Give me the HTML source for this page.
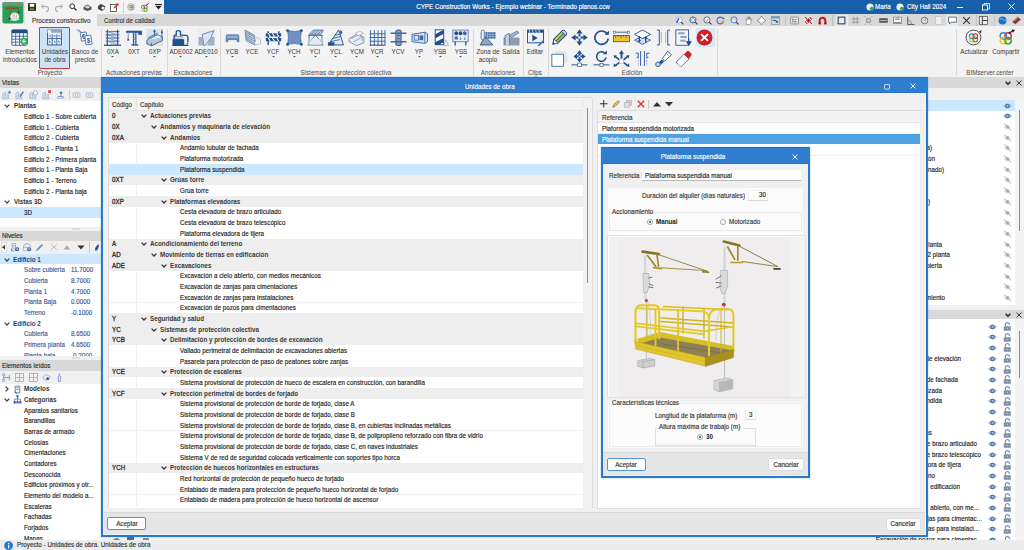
<!DOCTYPE html><html><head><meta charset="utf-8"><style>

html,body{margin:0;padding:0;width:1024px;height:550px;overflow:hidden;background:#f3f3f3;font-family:"Liberation Sans", sans-serif;}
div{position:absolute;box-sizing:border-box;}
.t{font-size:6.55px;line-height:10px;height:10px;white-space:nowrap;color:#222;-webkit-text-stroke:0.15px currentColor;transform:scaleX(0.95);transform-origin:0 50%;letter-spacing:0.04px;}
.b{font-weight:bold;font-size:6.6px;letter-spacing:0px;-webkit-text-stroke:0px;}
.c{width:120px;text-align:center;transform-origin:50% 50%;}
svg{position:absolute;overflow:visible;}

</style></head><body>
<div style="left:164.00px;top:0.00px;width:860.00px;height:14.00px;background:#185faa"></div>
<div class="t c" style="left:363px;width:300px;top:1.5px;color:#fff;">CYPE Construction Works - Ejemplo webinar - Terminado planos.ccw</div>
<div class="t" style="left:875.00px;top:1.90px;color:#fff">Maria</div>
<div class="t" style="left:906.50px;top:1.90px;color:#fff">City Hall 2024</div>
<svg style="left:865.50px;top:2.50px" width="8" height="8" viewBox="0 0 8 8"><circle cx="4" cy="4" r="3.6" fill="#e8eef5"/><circle cx="5.8" cy="5.8" r="2" fill="#39a84a"/></svg>
<svg style="left:896.00px;top:2.50px" width="8" height="8" viewBox="0 0 8 8"><circle cx="4" cy="4" r="3.6" fill="#e8eef5"/><circle cx="5.8" cy="5.8" r="2" fill="#39a84a"/></svg>
<div style="left:957.00px;top:6.50px;width:6.00px;height:0.80px;background:#fff"></div>
<svg style="left:982.00px;top:3.00px" width="8" height="8" viewBox="0 0 8 8"><rect x="0.5" y="2" width="5" height="5" fill="none" stroke="#fff" stroke-width="0.9"/><path d="M2 2V0.5h5.5V6H6" fill="none" stroke="#fff" stroke-width="0.8"/></svg>
<svg style="left:1007.50px;top:3.00px" width="7" height="7" viewBox="0 0 7 7"><path d="M0.5 0.5L6.5 6.5M6.5 0.5L0.5 6.5" stroke="#fff" stroke-width="1"/></svg>
<div style="left:0.00px;top:0.00px;width:24.50px;height:26.50px;background:#f3f3f3;border-right:0.5px solid #e2e2e2;border-bottom:0.5px solid #e2e2e2"></div>
<svg style="left:1.50px;top:2.00px" width="22" height="21.5" viewBox="0 0 22 21.5"><rect x="0.4" y="0" width="21" height="21.4" rx="1.6" fill="#24a05c"/><path d="M0.4 1.6Q0.4 0 2 0H19.8Q21.4 0 21.4 1.6V3.7H0.4Z" fill="#6a9c7a"/><path d="M3.7 6.3H17.2" stroke="#8a6424" stroke-width="2.6"/><path d="M4.5 6.3H16.5" stroke="#5a4020" stroke-width="0.8" stroke-dasharray="1 1"/><path d="M8.4 3.2V16.5" stroke="#8a6424" stroke-width="1.5"/><path d="M6.5 16.8H9.5" stroke="#3a2a10" stroke-width="1.2"/><path d="M16.7 7.5V10" stroke="#444" stroke-width="0.6"/><rect x="16.1" y="9.6" width="1.3" height="1.5" fill="#3a2a10"/><ellipse cx="12.7" cy="14.5" rx="4.4" ry="4" fill="#f4f4f4"/><path d="M11 11.5V17.5M12.7 10.8V18.2M14.4 11.5V17.5" stroke="#aaa" stroke-width="0.6"/><path d="M8 17.8Q12.7 19.6 17.5 17.3" stroke="#ddd" stroke-width="1" fill="none"/></svg>
<svg style="left:27.50px;top:3.00px" width="8" height="8" viewBox="0 0 8 8"><rect x="0" y="0" width="8" height="8" rx="0.8" fill="#3a2f10"/><rect x="1.8" y="0.8" width="4.4" height="3" fill="#fff"/><rect x="2" y="5.2" width="4" height="2" fill="#776"/></svg>
<svg style="left:41.00px;top:3.00px" width="8" height="8" viewBox="0 0 8 8"><path d="M2.5 1.5L0.8 3.5L2.5 5.5M1 3.5H5a2.5 2.5 0 0 1 0 5" fill="none" stroke="#a9a9a9" stroke-width="1.1"/></svg>
<svg style="left:54.50px;top:3.00px" width="8" height="8" viewBox="0 0 8 8"><path d="M5.5 1.5L7.2 3.5L5.5 5.5M7 3.5H3a2.5 2.5 0 0 0 0 5" fill="none" stroke="#a9a9a9" stroke-width="1.1"/></svg>
<svg style="left:69.00px;top:3.00px" width="8" height="8" viewBox="0 0 8 8"><circle cx="3.2" cy="3.2" r="2.4" fill="none" stroke="#333" stroke-width="1"/><path d="M5 5L7.5 7.5" stroke="#333" stroke-width="1.3"/></svg>
<svg style="left:83.00px;top:3.00px" width="9" height="8" viewBox="0 0 9 8"><path d="M0.5 4L4.5 1.5L8.5 4V6.5L4.5 8L0.5 6.5Z" fill="#555"/><path d="M1.5 4L4.5 2.5L7.5 4L4.5 5.5Z" fill="#ddd"/></svg>
<svg style="left:96.50px;top:3.00px" width="9" height="8" viewBox="0 0 9 8"><path d="M1 3L4 1L8 3V6L5 8L1 6Z" fill="#444"/><circle cx="6" cy="5" r="1.6" fill="#eee"/></svg>
<svg style="left:110.00px;top:2.50px" width="9" height="9" viewBox="0 0 9 9"><rect x="0.5" y="1.5" width="6" height="7" fill="#fff" stroke="#444" stroke-width="0.8"/><path d="M4 5L8 1" stroke="#e02020" stroke-width="1.2"/><path d="M6 0.5H8.5V3" fill="#e02020"/></svg>
<div style="left:122.50px;top:1.50px;width:0.60px;height:11.00px;background:#d0d0d0"></div>
<svg style="left:127.00px;top:3.00px" width="8" height="8" viewBox="0 0 8 8"><circle cx="4" cy="4" r="3.4" fill="#f7f7f7" stroke="#888" stroke-width="0.6"/><circle cx="3" cy="3.5" r="1.3" fill="none" stroke="#2b8ce0" stroke-width="0.7"/><circle cx="5" cy="3.5" r="1.3" fill="none" stroke="#e03030" stroke-width="0.7"/><circle cx="3" cy="5.2" r="1.3" fill="none" stroke="#f0c020" stroke-width="0.7"/><circle cx="5" cy="5.2" r="1.3" fill="none" stroke="#30a030" stroke-width="0.7"/></svg>
<svg style="left:140.00px;top:2.50px" width="9" height="9" viewBox="0 0 9 9"><circle cx="3" cy="4" r="1.7" fill="none" stroke="#2b8ce0" stroke-width="0.9"/><circle cx="5.5" cy="4" r="1.7" fill="none" stroke="#e03030" stroke-width="0.9"/><circle cx="3" cy="6.8" r="1.7" fill="none" stroke="#f0c020" stroke-width="0.9"/><circle cx="5.5" cy="6.8" r="1.7" fill="none" stroke="#30a030" stroke-width="0.9"/><path d="M6 2.5L8.5 0.5" stroke="#222" stroke-width="1"/></svg>
<svg style="left:154.50px;top:4.00px" width="7" height="6" viewBox="0 0 7 6"><rect x="0" y="0" width="7" height="1.2" fill="#222"/><path d="M0.5 2H6.5L3.5 5.5Z" fill="#222"/></svg>
<div style="left:97.00px;top:14.00px;width:927.00px;height:12.30px;background:#d9d9d9"></div>
<div class="t" style="left:31.50px;top:15.60px;color:#3a3a3a">Proceso constructivo</div>
<div class="t" style="left:104.00px;top:15.60px;color:#3a3a3a">Control de calidad</div>
<div style="left:0.00px;top:26.30px;width:1024.00px;height:50.70px;background:#f3f3f3"></div>
<div style="left:39.30px;top:26.60px;width:31.00px;height:42.00px;background:#cce4f7;border:1.6px solid #d3343a;border-radius:1px"></div>
<svg style="left:11.20px;top:28.70px" width="17" height="17" viewBox="0 0 16 16"><rect x="0.8" y="0.8" width="14.5" height="14.5" rx="1" fill="#fff" stroke="#2a5a9a" stroke-width="0.9"/><rect x="0.8" y="0.8" width="14.5" height="3.2" fill="#1f4f8f"/><path d="M0.8 6.8H15.3M0.8 9.6H15.3M0.8 12.4H15.3M4.4 4V15.3M8 4V15.3M11.6 4V15.3" stroke="#2a5a9a" stroke-width="0.8"/><circle cx="12.2" cy="11.5" r="3.2" fill="#2ca84a"/><path d="M12.2 9.5V13.5M10.2 11.5H14.2" stroke="#fff" stroke-width="1"/></svg>
<svg style="left:46.30px;top:28.70px" width="17" height="17" viewBox="0 0 16 16"><rect x="1.5" y="1" width="13" height="14" fill="#e9eef5" stroke="#2a5a9a" stroke-width="0.9"/><rect x="1.5" y="1" width="13" height="2.5" fill="#9aa8b8"/><rect x="1.5" y="1" width="3" height="2.5" fill="#fff"/><path d="M1.5 9H14.5M5.8 5V15M10.2 5V15" stroke="#2a5a9a" stroke-width="0.8"/><path d="M3 6.5h1.5M7 6.5h2M11.5 6.5h1.5M3.5 11v2M7.5 11l1.5 2M11.5 11l1.5 2" stroke="#1f4f8f" stroke-width="0.8"/></svg>
<svg style="left:76.30px;top:28.70px" width="17" height="17" viewBox="0 0 16 16"><path d="M0.5 0.8L4.5 3.2M2 0.3L5 3" stroke="#3a6aa5" stroke-width="0.6"/><path d="M4 3.5L9.5 2.8L11 10.5L5.2 11.5Z" fill="#fff" stroke="#3a6aa5" stroke-width="0.8"/><path d="M8.2 6.5L13.8 5.8L15.2 14.2L9.5 15Z" fill="#fff" stroke="#3a6aa5" stroke-width="0.8"/><text x="5.3" y="9.3" font-size="6" font-weight="bold" fill="#2a5a9a" font-family="Liberation Sans">€</text><text x="10" y="13.3" font-size="6" font-weight="bold" fill="#2a5a9a" font-family="Liberation Sans">$</text></svg>
<div class="t c" style="left:-40.30px;top:47.20px;color:#3c3c3c;-webkit-text-stroke:0.04px currentColor;font-size:6.5px">Elementos</div>
<div class="t c" style="left:-40.30px;top:55.10px;color:#3c3c3c;-webkit-text-stroke:0.04px currentColor;font-size:6.5px">introducidos</div>
<div class="t c" style="left:-5.20px;top:47.20px;color:#3c3c3c;-webkit-text-stroke:0.04px currentColor;font-size:6.5px">Unidades</div>
<div class="t c" style="left:-5.20px;top:55.10px;color:#3c3c3c;-webkit-text-stroke:0.04px currentColor;font-size:6.5px">de obra</div>
<div class="t c" style="left:24.80px;top:47.20px;color:#3c3c3c;-webkit-text-stroke:0.04px currentColor;font-size:6.5px">Banco de</div>
<div class="t c" style="left:24.80px;top:55.10px;color:#3c3c3c;-webkit-text-stroke:0.04px currentColor;font-size:6.5px">precios</div>
<div class="t c" style="left:-10.00px;top:68.30px;color:#505050;-webkit-text-stroke:0.04px currentColor;font-size:6.5px">Proyecto</div>
<div style="left:101.00px;top:28.50px;width:0.80px;height:47.00px;background:#d8d8d8"></div>
<div style="left:166.60px;top:28.50px;width:0.80px;height:47.00px;background:#d8d8d8"></div>
<div style="left:220.00px;top:28.50px;width:0.80px;height:47.00px;background:#d8d8d8"></div>
<div style="left:472.90px;top:28.50px;width:0.80px;height:47.00px;background:#d8d8d8"></div>
<div style="left:523.40px;top:28.50px;width:0.80px;height:47.00px;background:#d8d8d8"></div>
<div style="left:547.50px;top:28.50px;width:0.80px;height:47.00px;background:#d8d8d8"></div>
<div style="left:717.00px;top:28.50px;width:0.80px;height:47.00px;background:#d8d8d8"></div>
<div style="left:956.30px;top:28.50px;width:0.80px;height:47.00px;background:#d8d8d8"></div>
<svg style="left:104.20px;top:28.70px" width="17" height="17" viewBox="0 0 16 16"><path d="M3.2 0.8V15M12.8 0.8V15" stroke="#2a5a9a" stroke-width="1.2"/><path d="M1.5 2.5H14.5M1.5 5.5H14.5M1.5 8.5H14.5M1.5 11.5H14.5" stroke="#2a5a9a" stroke-width="0.9"/><path d="M3.2 2.5L12.8 5.5M3.2 5.5L12.8 8.5M3.2 8.5L12.8 11.5M3.2 11.5L12.8 14.5" stroke="#6f8fbf" stroke-width="0.7"/><path d="M7 1V15M9 1V15" stroke="#9fb3d0" stroke-width="0.6"/><path d="M0 15.3H16" stroke="#2a5a9a" stroke-width="1.3"/></svg>
<div class="t c" style="left:52.70px;top:47.00px;color:#3c3c3c;-webkit-text-stroke:0.04px currentColor;font-size:6.5px">0XA</div>
<svg style="left:111.20px;top:55.80px" width="3" height="2" viewBox="0 0 3 2"><path d="M0 0H3L1.5 1.6Z" fill="#555"/></svg>
<svg style="left:125.10px;top:28.70px" width="17" height="17" viewBox="0 0 16 16"><path d="M1 2.6H15.5" stroke="#2a5a9a" stroke-width="2"/><rect x="12.5" y="2" width="3.5" height="3.5" fill="#2a5a9a"/><path d="M8 3V14.5M10.2 3V14.5" stroke="#2a5a9a" stroke-width="1.2"/><path d="M8 5L10.2 7L8 9L10.2 11L8 13" stroke="#6f8fbf" stroke-width="0.7" fill="none"/><path d="M6 15H12.5" stroke="#2a5a9a" stroke-width="1.4"/><path d="M3 3V9" stroke="#6f8fbf" stroke-width="0.9"/><rect x="2.2" y="9" width="1.6" height="2" fill="#2a5a9a"/></svg>
<div class="t c" style="left:73.60px;top:47.00px;color:#3c3c3c;-webkit-text-stroke:0.04px currentColor;font-size:6.5px">0XT</div>
<svg style="left:146.10px;top:28.70px" width="17" height="17" viewBox="0 0 16 16"><rect x="0" y="0" width="16" height="16" fill="#dbe5f0"/><path d="M0.8 10.5L11 5.5L15.5 7.5L5.2 12.8Z" fill="#eef2f7" stroke="#2a5a9a" stroke-width="0.7"/><path d="M0.8 10.5V13.8L5.2 15.8L15.5 10.8V7.5" fill="#b9c6d6" stroke="#2a5a9a" stroke-width="0.8"/><path d="M5.2 12.8V15.8" stroke="#2a5a9a" stroke-width="0.7"/><path d="M1.5 9.2L11 4.5M2 8L11 3.7" stroke="#2a5a9a" stroke-width="0.6"/><path d="M8 0.5V6M15 0.5V7" stroke="#2a5a9a" stroke-width="0.8"/><circle cx="8" cy="2.3" r="1.1" fill="#2a5a9a"/><circle cx="15" cy="3" r="0.9" fill="#2a5a9a"/></svg>
<div class="t c" style="left:94.60px;top:47.00px;color:#3c3c3c;-webkit-text-stroke:0.04px currentColor;font-size:6.5px">0XP</div>
<svg style="left:153.10px;top:55.80px" width="3" height="2" viewBox="0 0 3 2"><path d="M0 0H3L1.5 1.6Z" fill="#555"/></svg>
<svg style="left:172.10px;top:28.70px" width="17" height="17" viewBox="0 0 16 16"><path d="M0.5 9.5H11.5V15.3H0.5Z" fill="#1f4f8f"/><path d="M2 9.5V6.5Q2 5.8 3 5.8H4V3Q4 1.5 6 1.5Q8 1.5 8 3V5.8H9.5L13.5 6Q15 6.3 15 8V12.5" fill="none" stroke="#1f4f8f" stroke-width="1.3"/><rect x="2.5" y="7" width="7.5" height="1.6" rx="0.8" fill="#fff" stroke="#1f4f8f" stroke-width="0.5"/><path d="M14.2 12.5L15.5 14L13.5 14.5Z" fill="#1f4f8f"/><path d="M0.3 15.4H15.5" stroke="#1f4f8f" stroke-width="1.2"/></svg>
<div class="t c" style="left:120.60px;top:47.00px;color:#3c3c3c;-webkit-text-stroke:0.04px currentColor;font-size:6.5px">ADE002</div>
<svg style="left:179.10px;top:55.80px" width="3" height="2" viewBox="0 0 3 2"><path d="M0 0H3L1.5 1.6Z" fill="#555"/></svg>
<svg style="left:197.50px;top:28.70px" width="17" height="17" viewBox="0 0 16 16"><path d="M0.5 7.5L4 7.5L5.5 15.5H0.5Z" fill="#8797ad"/><path d="M11 7.5H15.5V15.5H9Z" fill="#8797ad"/><path d="M4 5L15 1.5L12 8.5L7 15.5H5.5Z" fill="#dde5ee" stroke="#2a5a9a" stroke-width="0.9"/><rect x="0" y="0" width="16" height="16" fill="#dbe5f0" opacity="0.35"/></svg>
<div class="t c" style="left:146.00px;top:47.00px;color:#3c3c3c;-webkit-text-stroke:0.04px currentColor;font-size:6.5px">ADE010</div>
<svg style="left:204.50px;top:55.80px" width="3" height="2" viewBox="0 0 3 2"><path d="M0 0H3L1.5 1.6Z" fill="#555"/></svg>
<svg style="left:223.60px;top:28.70px" width="17" height="17" viewBox="0 0 16 16"><path d="M2 6.5Q2 5.5 3 5.5H13Q14 5.5 14 6.5V12H12.3V10H3.7V12H2Z" fill="#6f8fbf" stroke="#3a6aa5" stroke-width="0.6"/><path d="M3 7.5H13" stroke="#dfe6f0" stroke-width="0.7"/></svg>
<div class="t c" style="left:172.10px;top:47.00px;color:#3c3c3c;-webkit-text-stroke:0.04px currentColor;font-size:6.5px">YCB</div>
<svg style="left:230.60px;top:55.80px" width="3" height="2" viewBox="0 0 3 2"><path d="M0 0H3L1.5 1.6Z" fill="#555"/></svg>
<svg style="left:243.90px;top:28.70px" width="17" height="17" viewBox="0 0 16 16"><path d="M1 1L10 6V15L2 11Z" fill="#c8d1dc" stroke="#3a6aa5" stroke-width="0.7"/><path d="M2 3L9 7M2 5L9 9M2 7L9 11M2 9L9 13" stroke="#3a6aa5" stroke-width="0.6"/><path d="M10 9L13 8L15.5 10V14L10 15Z" fill="#eef1f5" stroke="#9ab" stroke-width="0.6"/><path d="M10.5 10V12" stroke="#e04040" stroke-width="0.8"/></svg>
<div class="t c" style="left:192.40px;top:47.00px;color:#3c3c3c;-webkit-text-stroke:0.04px currentColor;font-size:6.5px">YCE</div>
<svg style="left:264.90px;top:28.70px" width="17" height="17" viewBox="0 0 16 16"><path d="M3 2V15M13 2V15" stroke="#1f4f8f" stroke-width="1.3"/><rect x="0.8" y="4" width="14.4" height="3" fill="#1f4f8f"/><rect x="0.8" y="8.5" width="14.4" height="3" fill="#1f4f8f"/><path d="M3 4L5 7M7 4L9 7M11 4L13 7M3 8.5L5 11.5M7 8.5L9 11.5M11 8.5L13 11.5" stroke="#fff" stroke-width="1"/></svg>
<div class="t c" style="left:213.40px;top:47.00px;color:#3c3c3c;-webkit-text-stroke:0.04px currentColor;font-size:6.5px">YCF</div>
<svg style="left:271.90px;top:55.80px" width="3" height="2" viewBox="0 0 3 2"><path d="M0 0H3L1.5 1.6Z" fill="#555"/></svg>
<svg style="left:285.80px;top:28.70px" width="17" height="17" viewBox="0 0 16 16"><path d="M1.5 1.5Q8 3 14.5 1.5Q13 8 14.5 14.5Q8 13 1.5 14.5Q3 8 1.5 1.5Z" fill="#7090bf" stroke="#3a6aa5" stroke-width="0.6"/><circle cx="1.5" cy="1.5" r="1.3" fill="#1f4f8f"/><circle cx="14.5" cy="1.5" r="1.3" fill="#1f4f8f"/><circle cx="1.5" cy="14.5" r="1.3" fill="#1f4f8f"/><circle cx="14.5" cy="14.5" r="1.3" fill="#1f4f8f"/></svg>
<div class="t c" style="left:234.30px;top:47.00px;color:#3c3c3c;-webkit-text-stroke:0.04px currentColor;font-size:6.5px">YCH</div>
<svg style="left:292.80px;top:55.80px" width="3" height="2" viewBox="0 0 3 2"><path d="M0 0H3L1.5 1.6Z" fill="#555"/></svg>
<svg style="left:306.80px;top:28.70px" width="17" height="17" viewBox="0 0 16 16"><path d="M0.5 15H15.5M1 6H15M2 6V15M14 6V15M2 12L8 6L14 12" stroke="#3a6aa5" stroke-width="0.9" fill="none"/><path d="M2 5L6 1H15.5L13 5Z" fill="#c0cad6" stroke="#3a6aa5" stroke-width="0.7"/><path d="M4 5L8 1M7 5L11 1M10 5L14 1" stroke="#3a6aa5" stroke-width="0.6"/><rect x="2" y="9" width="12" height="6" fill="#dfe6ee" opacity="0.7"/></svg>
<div class="t c" style="left:255.30px;top:47.00px;color:#3c3c3c;-webkit-text-stroke:0.04px currentColor;font-size:6.5px">YCI</div>
<svg style="left:313.80px;top:55.80px" width="3" height="2" viewBox="0 0 3 2"><path d="M0 0H3L1.5 1.6Z" fill="#555"/></svg>
<svg style="left:327.10px;top:28.70px" width="17" height="17" viewBox="0 0 16 16"><path d="M1 15L11 1L15.5 15Z" fill="#dfe6ee" stroke="#1f4f8f" stroke-width="0.9"/><path d="M3 12L12 10M5 9L13 7M7 6L13.5 4.5" stroke="#1f4f8f" stroke-width="0.7"/><rect x="1" y="12.5" width="6" height="3" fill="#1f4f8f"/><circle cx="13" cy="3" r="1.5" fill="#3a6aa5"/></svg>
<div class="t c" style="left:275.60px;top:47.00px;color:#3c3c3c;-webkit-text-stroke:0.04px currentColor;font-size:6.5px">YCL</div>
<svg style="left:334.10px;top:55.80px" width="3" height="2" viewBox="0 0 3 2"><path d="M0 0H3L1.5 1.6Z" fill="#555"/></svg>
<svg style="left:348.00px;top:28.70px" width="17" height="17" viewBox="0 0 16 16"><path d="M1 9L8 5L15 8V13L8 15.5L1 12Z" fill="#e6ebf1" stroke="#6b7f99" stroke-width="0.7"/><path d="M3 9L10 5.5L13.5 7L13.5 11M5 12L12 8.5" fill="none" stroke="#6b7f99" stroke-width="0.6"/><path d="M7 4L11 2L14.5 4L10 6.5Z" fill="#f3f5f8" stroke="#8090a8" stroke-width="0.5"/></svg>
<div class="t c" style="left:296.50px;top:47.00px;color:#3c3c3c;-webkit-text-stroke:0.04px currentColor;font-size:6.5px">YCM</div>
<svg style="left:355.00px;top:55.80px" width="3" height="2" viewBox="0 0 3 2"><path d="M0 0H3L1.5 1.6Z" fill="#555"/></svg>
<svg style="left:368.90px;top:28.70px" width="17" height="17" viewBox="0 0 16 16"><path d="M1.5 1V15M5 1V15M8.5 1V15M12 1V15M15 1V15M0.5 4.5H15.5M0.5 8H15.5M0.5 11.5H15.5" stroke="#3a6aa5" stroke-width="0.9"/><path d="M0.5 15.2H15.5" stroke="#1f4f8f" stroke-width="1"/></svg>
<div class="t c" style="left:317.40px;top:47.00px;color:#3c3c3c;-webkit-text-stroke:0.04px currentColor;font-size:6.5px">YCR</div>
<svg style="left:375.90px;top:55.80px" width="3" height="2" viewBox="0 0 3 2"><path d="M0 0H3L1.5 1.6Z" fill="#555"/></svg>
<svg style="left:389.90px;top:28.70px" width="17" height="17" viewBox="0 0 16 16"><rect x="5.5" y="1" width="5" height="14.5" rx="1" fill="#8aa0bd" stroke="#1f4f8f" stroke-width="0.8"/><path d="M0.5 4H15.5M0.5 12H15.5" stroke="#3a6aa5" stroke-width="1.4"/><path d="M7 6H9M7 9H9" stroke="#1f4f8f" stroke-width="0.8"/></svg>
<div class="t c" style="left:338.40px;top:47.00px;color:#3c3c3c;-webkit-text-stroke:0.04px currentColor;font-size:6.5px">YCV</div>
<svg style="left:410.80px;top:28.70px" width="17" height="17" viewBox="0 0 16 16"><path d="M1 5L13 3L15.5 4.5V12L13 13.5L1 12Z" fill="#dde4ee" stroke="#3a6aa5" stroke-width="0.9"/><path d="M13 3V13.5" stroke="#3a6aa5" stroke-width="0.8"/><rect x="3" y="6" width="4" height="4.5" fill="none" stroke="#3a6aa5" stroke-width="0.8"/><rect x="8" y="6" width="3.5" height="4.5" fill="#3a6aa5"/></svg>
<div class="t c" style="left:359.30px;top:47.00px;color:#3c3c3c;-webkit-text-stroke:0.04px currentColor;font-size:6.5px">YP</div>
<svg style="left:417.80px;top:55.80px" width="3" height="2" viewBox="0 0 3 2"><path d="M0 0H3L1.5 1.6Z" fill="#555"/></svg>
<svg style="left:431.80px;top:28.70px" width="17" height="17" viewBox="0 0 16 16"><rect x="3" y="0.8" width="8" height="14" fill="#fff" stroke="#1f4f8f" stroke-width="0.9"/><path d="M3 5L11 0.8V4.5L3 9ZM3 12.5L11 8.5V12.5L6 15H3Z" fill="#1f4f8f"/><path d="M11 15.5L13 10L15.5 15.5Z" fill="#eef1f5" stroke="#889" stroke-width="0.5"/></svg>
<div class="t c" style="left:380.30px;top:47.00px;color:#3c3c3c;-webkit-text-stroke:0.04px currentColor;font-size:6.5px">YSB</div>
<svg style="left:438.80px;top:55.80px" width="3" height="2" viewBox="0 0 3 2"><path d="M0 0H3L1.5 1.6Z" fill="#555"/></svg>
<svg style="left:452.10px;top:28.70px" width="17" height="17" viewBox="0 0 16 16"><rect x="0.8" y="1" width="14.4" height="11" fill="#e8edf3" stroke="#3a6aa5" stroke-width="0.7"/><circle cx="4" cy="4" r="1.8" fill="#1f4f8f"/><circle cx="8" cy="4" r="1.8" fill="#1f4f8f"/><circle cx="12" cy="4" r="1.8" fill="#3a6aa5"/><circle cx="4" cy="8.5" r="1.6" fill="#3a6aa5"/><path d="M7 10L8 7L9 10ZM11 10L12 7L13 10Z" fill="#6b8fbf"/><path d="M3 12V15.5M13 12V15.5" stroke="#1f4f8f" stroke-width="1.2"/></svg>
<div class="t c" style="left:400.60px;top:47.00px;color:#3c3c3c;-webkit-text-stroke:0.04px currentColor;font-size:6.5px">YSS</div>
<svg style="left:459.10px;top:55.80px" width="3" height="2" viewBox="0 0 3 2"><path d="M0 0H3L1.5 1.6Z" fill="#555"/></svg>
<div class="t c" style="left:73.60px;top:68.30px;color:#505050;-webkit-text-stroke:0.04px currentColor;font-size:6.5px">Actuaciones previas</div>
<div class="t c" style="left:133.30px;top:68.30px;color:#505050;-webkit-text-stroke:0.04px currentColor;font-size:6.5px">Excavaciones</div>
<div class="t c" style="left:286.40px;top:68.30px;color:#505050;-webkit-text-stroke:0.04px currentColor;font-size:6.5px">Sistemas de protección colectiva</div>
<svg style="left:479.10px;top:28.70px" width="17" height="17" viewBox="0 0 16 16"><path d="M1 15L6 7L13 15Z" fill="#9aa6b5" stroke="#1f4f8f" stroke-width="0.8"/><rect x="2" y="1" width="3" height="9" rx="1.5" fill="#eef2f7" stroke="#3a6aa5" stroke-width="0.8"/><rect x="6" y="3" width="9.5" height="6" fill="#3a6aa5"/><path d="M6 5H15.5M6 7H15.5M8 3V9M10.5 3V9M13 3V9" stroke="#cbd6e3" stroke-width="0.5"/></svg>
<div class="t c" style="left:427.60px;top:47.10px;color:#3c3c3c;-webkit-text-stroke:0.04px currentColor;font-size:6.5px">Zona de</div>
<div class="t c" style="left:427.60px;top:54.90px;color:#3c3c3c;-webkit-text-stroke:0.04px currentColor;font-size:6.5px">acopio</div>
<svg style="left:502.50px;top:28.70px" width="17" height="17" viewBox="0 0 16 16"><rect x="0.5" y="8" width="15" height="7.5" fill="#8f9cae"/><path d="M2 15V6L6 4V15" fill="#c9d2dd" stroke="#3a6aa5" stroke-width="0.7"/><path d="M6 6L13 2L15 3.5L8 8Z" fill="#aab6c6" stroke="#3a6aa5" stroke-width="0.7"/></svg>
<div class="t c" style="left:451.00px;top:47.10px;color:#3c3c3c;-webkit-text-stroke:0.04px currentColor;font-size:6.5px">Salida</div>
<svg style="left:526.90px;top:28.70px" width="17" height="17" viewBox="0 0 16 16"><rect x="0.5" y="1" width="15" height="12" fill="#eef2f7" stroke="#1f4f8f" stroke-width="0.9"/><rect x="0.5" y="1" width="15" height="2.5" fill="#1f4f8f"/><path d="M2 1l1 2.5M5 1l1 2.5M8 1l1 2.5M11 1l1 2.5" stroke="#fff" stroke-width="0.7"/><path d="M5 5.5V11.5L10 8.5Z" fill="#1f4f8f"/><path d="M10 15.5L15 10.5L16 11.5L11 16.5Z" fill="#3a6aa5"/></svg>
<div class="t c" style="left:475.40px;top:47.10px;color:#3c3c3c;-webkit-text-stroke:0.04px currentColor;font-size:6.5px">Editar</div>
<div class="t c" style="left:438.20px;top:68.30px;color:#505050;-webkit-text-stroke:0.04px currentColor;font-size:6.5px">Anotaciones</div>
<div class="t c" style="left:475.00px;top:68.30px;color:#505050;-webkit-text-stroke:0.04px currentColor;font-size:6.5px">Clips</div>
<div style="left:695.50px;top:28.00px;width:19.70px;height:19.00px;background:#d9e8f6;border-radius:1px"></div>
<svg style="left:551.20px;top:28.70px" width="17" height="17" viewBox="0 0 16 16"><g transform="rotate(-45 8 8)"><path d="M3.2 5.3H14.2Q15.8 5.3 15.8 8Q15.8 10.7 14.2 10.7H3.2L-0.8 8Z" fill="#f0c838" stroke="#1f4f8f" stroke-width="0.9"/><path d="M3.2 8H14.5" stroke="#2a7a3a" stroke-width="0.9"/><path d="M3.2 9.6H14.5" stroke="#1f4f8f" stroke-width="0.6"/><path d="M13.2 5.3V10.7" stroke="#1f4f8f" stroke-width="0.7"/><path d="M14 5.6Q15.6 5.6 15.6 8Q15.6 10.4 14 10.4Z" fill="#c9d6e6"/><path d="M3.2 5.3L-0.8 8L3.2 10.7Z" fill="#fff" stroke="#1f4f8f" stroke-width="0.7"/><path d="M0.9 6.9L-0.8 8L0.9 9.1Z" fill="#1f4f8f"/></g></svg>
<svg style="left:571.40px;top:28.70px" width="17" height="17" viewBox="0 0 16 16"><path d="M8 0.2L10.9 4.3H5.1ZM8 15.8L10.9 11.7H5.1ZM0.2 8L4.3 5.1V10.9ZM15.8 8L11.7 5.1V10.9Z" fill="#1f4f8f"/><path d="M8 4V12M4 8H12" stroke="#1f4f8f" stroke-width="1.7"/><circle cx="8" cy="8" r="1.2" fill="#f3f3f3"/></svg>
<svg style="left:592.50px;top:28.70px" width="17" height="17" viewBox="0 0 16 16"><path d="M13.5 5A6.3 6.3 0 1 0 14.3 9" fill="none" stroke="#1f4f8f" stroke-width="1.5"/><path d="M11 5.5H15V1.5Z" fill="#1f4f8f"/></svg>
<svg style="left:612.70px;top:28.70px" width="17" height="17" viewBox="0 0 16 16"><rect x="0.5" y="6" width="15" height="6" fill="#f0c030" stroke="#1f4f8f" stroke-width="0.7"/><path d="M2.5 6V8.5M5 6V7.5M7.5 6V8.5M10 6V7.5M12.5 6V8.5" stroke="#1f4f8f" stroke-width="0.6"/><path d="M1 3H15" stroke="#1f4f8f" stroke-width="0.8"/><rect x="0.5" y="2" width="2" height="2" fill="#fff" stroke="#1f4f8f" stroke-width="0.5"/><rect x="13.5" y="2" width="2" height="2" fill="#fff" stroke="#1f4f8f" stroke-width="0.5"/></svg>
<svg style="left:633.80px;top:28.70px" width="17" height="17" viewBox="0 0 16 16"><path d="M0.5 10.5L8 6.5L15.5 10.5L8 14.5Z" fill="#d5dde8" stroke="#2a5a9a" stroke-width="0.8"/><path d="M8 1L15.5 5L8 9L0.5 5Z" fill="#fff" stroke="#2a5a9a" stroke-width="0.9"/><path d="M5 6.5V11.5M11 8V13" stroke="#1f4f8f" stroke-width="1.2"/><path d="M3.3 10.5L5 13L6.7 10.5ZM9.3 9L11 6.5L12.7 9Z" fill="#1f4f8f"/></svg>
<svg style="left:654.90px;top:28.70px" width="17" height="17" viewBox="0 0 16 16"><path d="M2 1H4V15H2M14 1H12V15H14" fill="none" stroke="#1f4f8f" stroke-width="0.9"/><path d="M6 3V13M10 3V13" stroke="#8aa" stroke-width="0.7"/></svg>
<svg style="left:675.10px;top:28.70px" width="17" height="17" viewBox="0 0 16 16"><rect x="0.8" y="0.8" width="12" height="14.5" fill="#f4f6f9" stroke="#1f4f8f" stroke-width="0.8"/><rect x="3" y="3" width="6" height="2" fill="#8fa3bd"/><rect x="5" y="6.5" width="6" height="2" fill="#8fa3bd"/><rect x="5" y="10" width="5" height="2" fill="#8fa3bd"/><path d="M13 9V14M11 12L13 15L15 12Z" fill="#1f4f8f" stroke="#1f4f8f" stroke-width="1"/></svg>
<svg style="left:696.20px;top:28.70px" width="17" height="17" viewBox="0 0 16 16"><circle cx="8" cy="8" r="7.5" fill="#d0202a"/><path d="M4.8 4.8L11.2 11.2M11.2 4.8L4.8 11.2" stroke="#fff" stroke-width="1.8"/></svg>
<svg style="left:551.20px;top:49.70px" width="17" height="17" viewBox="0 0 16 16"><rect x="4" y="1" width="11" height="11" fill="#dfe6ee"/><rect x="0.8" y="4" width="11" height="11.3" fill="#fff" stroke="#3a6aa5" stroke-width="0.8"/></svg>
<svg style="left:571.40px;top:49.70px" width="17" height="17" viewBox="0 0 16 16"><path d="M8 0.3L10.6 3.8Q8 3.2 5.4 3.8ZM8 11.7L10.6 8.2Q8 8.8 5.4 8.2ZM2.3 6L5.8 3.4Q5.2 6 5.8 8.6ZM13.7 6L10.2 3.4Q10.8 6 10.2 8.6Z" fill="#1f4f8f"/><path d="M8 3V9M5 6H11" stroke="#1f4f8f" stroke-width="1.7"/><circle cx="8" cy="6" r="0.9" fill="#f3f3f3"/><path d="M0.5 14H15.5" stroke="#1f4f8f" stroke-width="0.9"/><rect x="6.3" y="12.3" width="3.4" height="3.4" fill="#fff" stroke="#1f4f8f" stroke-width="0.6"/></svg>
<svg style="left:592.50px;top:49.70px" width="17" height="17" viewBox="0 0 16 16"><path d="M11.5 3.5A4.5 4.5 0 1 0 12.3 7" fill="none" stroke="#1f4f8f" stroke-width="1.4"/><path d="M9.5 4H13V0.5Z" fill="#1f4f8f"/><path d="M0.5 14H15.5" stroke="#1f4f8f" stroke-width="0.9"/><rect x="6.5" y="12.5" width="3" height="3" fill="#fff" stroke="#1f4f8f" stroke-width="0.6"/></svg>
<svg style="left:612.70px;top:49.70px" width="17" height="17" viewBox="0 0 16 16"><path d="M8 2V8" stroke="#1f4f8f" stroke-width="1.8"/><path d="M5.5 3.5L8 0.3L10.5 3.5Z" fill="#1f4f8f"/><path d="M6.5 9.5L2.5 6.5M9.5 9.5L13.5 6.5M6.5 11.5L2.5 14.5M9.5 11.5L13.5 14.5" stroke="#1f4f8f" stroke-width="1.5"/><path d="M0.5 5L3.8 5.2L1.5 8ZM15.5 5L12.2 5.2L14.5 8ZM0.5 16L1 12.8L3.8 15ZM15.5 16L15 12.8L12.2 15Z" fill="#1f4f8f"/><rect x="6" y="8.5" width="4" height="4" fill="#fff" stroke="#9ab" stroke-width="0.5"/></svg>
<svg style="left:633.80px;top:49.70px" width="17" height="17" viewBox="0 0 16 16"><path d="M6.2 1V15M9.8 1V15" stroke="#2a5a9a" stroke-width="0.9"/><path d="M1.5 3H4V7H2.5M14.5 3H12V7H13.5" fill="none" stroke="#2a5a9a" stroke-width="0.9"/><path d="M4 7V15M12 7V15" stroke="#6f8fbf" stroke-width="0.7" stroke-dasharray="1.5 1"/></svg>
<svg style="left:654.90px;top:49.70px" width="17" height="17" viewBox="0 0 16 16"><path d="M7 8L12 1L15.5 4.5L9 10.5Z" fill="#fff" stroke="#2a5a9a" stroke-width="0.9"/><path d="M11 3.5L13.5 6M12.5 2.5L14 4" stroke="#8aa0bd" stroke-width="0.6"/><path d="M6.5 9L8.5 11L4.5 14.5L2.5 12.5Z" fill="#1f4f8f"/><circle cx="2.8" cy="13.5" r="2.2" fill="#c5d0de" stroke="#2a5a9a" stroke-width="0.8"/></svg>
<svg style="left:675.10px;top:49.70px" width="17" height="17" viewBox="0 0 16 16"><path d="M1 11.5L8.5 4L13 8.5L5.5 16Z" fill="#fff" stroke="#2a5a9a" stroke-width="0.8"/><path d="M8.5 4L11.5 1Q12.2 0.4 12.9 1L15.5 3.6Q16 4.3 15.4 5L13 8.5Z" fill="#d0202a"/><path d="M2.5 13L6 16" stroke="#c5d0de" stroke-width="1"/></svg>
<div class="t c" style="left:571.70px;top:68.30px;color:#505050;-webkit-text-stroke:0.04px currentColor;font-size:6.5px">Edición</div>
<svg style="left:965.10px;top:28.70px" width="17" height="17" viewBox="0 0 16 16"><circle cx="8" cy="8" r="7" fill="none" stroke="#333" stroke-width="0.8"/><path d="M13 2.5L15.5 1L15 4Z" fill="#222"/><circle cx="6.3" cy="6.8" r="2.2" fill="none" stroke="#2b8ce0" stroke-width="1"/><circle cx="9.7" cy="6.8" r="2.2" fill="none" stroke="#e03030" stroke-width="1"/><circle cx="6.3" cy="9.8" r="2.2" fill="none" stroke="#f0c020" stroke-width="1"/><circle cx="9.7" cy="9.8" r="2.2" fill="none" stroke="#30a030" stroke-width="1"/></svg>
<svg style="left:997.50px;top:28.70px" width="17" height="17" viewBox="0 0 16 16"><circle cx="5" cy="6.5" r="3" fill="none" stroke="#2b8ce0" stroke-width="1.3"/><circle cx="9.5" cy="6.5" r="3" fill="none" stroke="#e03030" stroke-width="1.3"/><circle cx="5" cy="11" r="3" fill="none" stroke="#f0c020" stroke-width="1.3"/><circle cx="9.5" cy="11" r="3" fill="none" stroke="#30a030" stroke-width="1.3"/><path d="M10 4L14.5 1.5" stroke="#222" stroke-width="1.2"/><path d="M13 0.3L16 1L14 3.5Z" fill="#222"/></svg>
<div class="t c" style="left:913.60px;top:46.90px;color:#3c3c3c;-webkit-text-stroke:0.04px currentColor;font-size:6.5px">Actualizar</div>
<div class="t c" style="left:946.00px;top:46.90px;color:#3c3c3c;-webkit-text-stroke:0.04px currentColor;font-size:6.5px">Compartir</div>
<div class="t c" style="left:930.00px;top:68.30px;color:#505050;-webkit-text-stroke:0.04px currentColor;font-size:6.5px">BIMserver.center</div>
<svg style="left:675.30px;top:15.50px" width="9" height="9" viewBox="0 0 16 16"><circle cx="7" cy="7" r="5.5" fill="#fff" stroke="#8a9ad8" stroke-width="1.3"/><path d="M3 12L7 4" stroke="#2f3fe0" stroke-width="2.5"/><path d="M11 11L15 15" stroke="#333" stroke-width="2"/></svg>
<svg style="left:688.60px;top:15.50px" width="9" height="9" viewBox="0 0 16 16"><circle cx="7" cy="7" r="5.5" fill="#f4f6fa" stroke="#444" stroke-width="1.3"/><path d="M11 11L15 15" stroke="#333" stroke-width="2"/><circle cx="7" cy="3.5" r="1.3" fill="#2f3fe0"/><circle cx="7" cy="10.5" r="1.3" fill="#2f3fe0"/><circle cx="3.5" cy="7" r="1.3" fill="#2f3fe0"/><circle cx="10.5" cy="7" r="1.3" fill="#2f3fe0"/></svg>
<svg style="left:702.70px;top:15.50px" width="9" height="9" viewBox="0 0 16 16"><circle cx="7" cy="7" r="5.5" fill="#f4f6fa" stroke="#444" stroke-width="1.3"/><path d="M11 11L15 15" stroke="#333" stroke-width="2"/><path d="M5 8a2 2 0 1 0 3-3" stroke="#2f3fe0" stroke-width="1" fill="none"/></svg>
<svg style="left:716.00px;top:15.50px" width="9" height="9" viewBox="0 0 16 16"><path d="M13 5A6 6 0 1 0 13 11" fill="none" stroke="#3a55d8" stroke-width="1.8"/><path d="M11 4L15 2L14 6Z" fill="#3a55d8"/><path d="M8 12L13 7L15 9L10 14Z" fill="#c9a030"/></svg>
<svg style="left:730.00px;top:15.50px" width="9" height="9" viewBox="0 0 16 16"><rect x="1" y="7" width="8" height="8" fill="#dfe6ee"/><circle cx="7" cy="7" r="5.5" fill="none" stroke="#3a55a8" stroke-width="1.3"/><path d="M11 11L15 15" stroke="#333" stroke-width="2"/></svg>
<svg style="left:744.10px;top:15.50px" width="9" height="9" viewBox="0 0 16 16"><path d="M4 15V7L3 5.5L4.5 5L6 7V2.5L7.5 2L8 6V1.5L9.5 1.5L10 6V2.5L11.5 2.5L12 8L13 6L14 7L12 13L10 15Z" fill="#fff" stroke="#666" stroke-width="0.9"/></svg>
<svg style="left:757.40px;top:15.50px" width="9" height="9" viewBox="0 0 16 16"><path d="M8 0.5L11 5L15.5 8L11 11L8 15.5L5 11L0.5 8L5 5Z" fill="#fff" stroke="#555" stroke-width="1"/></svg>
<svg style="left:771.40px;top:15.50px" width="9" height="9" viewBox="0 0 16 16"><rect x="1" y="1" width="14" height="3.5" fill="#47b3c4"/><rect x="1" y="1" width="14" height="14" fill="none" stroke="#777" stroke-width="0.9"/><path d="M3 8Q8 6 11 11" stroke="#2050b0" stroke-width="1.8" fill="none"/><path d="M9 12L13 12L12 8Z" fill="#2050b0"/></svg>
<div style="left:785.40px;top:15.00px;width:0.60px;height:10.50px;background:#c2c2c2"></div>
<svg style="left:790.20px;top:15.50px" width="9" height="9" viewBox="0 0 16 16"><rect x="1" y="2" width="14" height="12" rx="1" fill="#f2f2f2" stroke="#555" stroke-width="1"/><path d="M3 6H13M3 10H13M5 4V12M9 7V13" stroke="#555" stroke-width="0.9"/></svg>
<svg style="left:804.30px;top:15.50px" width="9" height="9" viewBox="0 0 16 16"><path d="M1 1H15V15H1Z" fill="#eee"/><path d="M2 2L6 6M10 2L14 6M2 10L6 14M10 10L14 14M4 8H12M8 4V12" stroke="#c02020" stroke-width="2"/><path d="M6 6L10 10M10 6L6 10" stroke="#333" stroke-width="1.5"/></svg>
<svg style="left:818.30px;top:15.50px" width="9" height="9" viewBox="0 0 16 16"><path d="M3 15V8A5 5 0 0 1 13 8V15" fill="none" stroke="#d01818" stroke-width="3.6"/><path d="M1.2 13H4.8M11.2 13H14.8" stroke="#333" stroke-width="2.6"/></svg>
<div style="left:832.30px;top:15.00px;width:0.60px;height:10.50px;background:#c2c2c2"></div>
<div style="left:835.80px;top:14.50px;width:12.00px;height:11.50px;background:#e2ecf5"></div>
<svg style="left:837.30px;top:15.50px" width="9" height="9" viewBox="0 0 16 16"><rect x="2" y="2" width="12" height="12" fill="none" stroke="#333" stroke-width="1.8"/></svg>
<svg style="left:850.80px;top:15.50px" width="9" height="9" viewBox="0 0 16 16"><path d="M1 5H15M1 11H15M5 1V15M11 1V15" stroke="#777" stroke-width="1"/></svg>
<svg style="left:864.20px;top:15.50px" width="9" height="9" viewBox="0 0 16 16"><rect x="5" y="5" width="6" height="6" fill="none" stroke="#666" stroke-width="1.2"/><path d="M1 1h2M13 1h2M1 15h2M13 15h2" stroke="#888" stroke-width="1"/></svg>
<svg style="left:878.60px;top:15.50px" width="9" height="9" viewBox="0 0 16 16"><rect x="0.5" y="4" width="15" height="8" fill="#555"/><path d="M2 8H14" stroke="#ccc" stroke-width="1.5"/></svg>
<svg style="left:893.00px;top:15.50px" width="9" height="9" viewBox="0 0 16 16"><rect x="1" y="2" width="14" height="9" fill="#fff" stroke="#555" stroke-width="1"/><path d="M3 6H13M0 13H16" stroke="#555" stroke-width="1.2"/><path d="M5 4H11" stroke="#777" stroke-width="1"/></svg>
<svg style="left:906.40px;top:15.50px" width="9" height="9" viewBox="0 0 16 16"><path d="M3 1V15H15" fill="none" stroke="#444" stroke-width="1.5"/><path d="M3 7A8 8 0 0 1 10 15" fill="none" stroke="#666" stroke-width="1"/></svg>
<svg style="left:919.90px;top:15.50px" width="9" height="9" viewBox="0 0 16 16"><circle cx="8" cy="8" r="6" fill="none" stroke="#555" stroke-width="1.2"/><path d="M8 8L11 4" stroke="#555" stroke-width="1.2"/></svg>
<svg style="left:933.90px;top:15.50px" width="9" height="9" viewBox="0 0 16 16"><rect x="3" y="1" width="11" height="14" fill="#eee" stroke="#bbb" stroke-width="1"/></svg>
<div style="left:946.20px;top:14.50px;width:12.00px;height:11.50px;background:#e2ecf5"></div>
<svg style="left:947.70px;top:15.50px" width="9" height="9" viewBox="0 0 16 16"><path d="M1 2H15V11H6L3 14V11H1Z" fill="#fff" stroke="#333" stroke-width="1.2"/></svg>
<svg style="left:962.10px;top:15.50px" width="9" height="9" viewBox="0 0 16 16"><path d="M2 2L14 14M14 2L2 14" stroke="#333" stroke-width="2"/></svg>
<div style="left:975.50px;top:15.00px;width:0.60px;height:10.50px;background:#c2c2c2"></div>
<svg style="left:979.10px;top:15.50px" width="9" height="9" viewBox="0 0 16 16"><rect x="1" y="1" width="14" height="14" fill="#eee" stroke="#444" stroke-width="1.2"/><path d="M6 1V15M6 8H15" stroke="#444" stroke-width="1.8"/></svg>
<div style="left:994.40px;top:15.00px;width:0.60px;height:10.50px;background:#c2c2c2"></div>
<svg style="left:998.00px;top:15.50px" width="9" height="9" viewBox="0 0 16 16"><circle cx="8" cy="8" r="7" fill="#1a6fd0"/><path d="M3 6Q6 3 9 6Q11 9 14 7" stroke="#9ad0ff" stroke-width="1.5" fill="none"/></svg>
<svg style="left:1012.30px;top:15.50px" width="9" height="9" viewBox="0 0 16 16"><path d="M1 10L10 2L15 6L6 14Z" fill="#8a2c4c" stroke="#333" stroke-width="0.8"/><path d="M3 9L10 3.5" stroke="#f0c030" stroke-width="1.5"/></svg>
<div style="left:0.00px;top:77.40px;width:100.50px;height:10.30px;background:#d9d9d9"></div>
<div class="t" style="left:1.60px;top:77.95px;color:#2a2a2a">Vistas</div>
<div style="left:0.00px;top:87.70px;width:100.50px;height:12.80px;background:#f0f0f0"></div>
<div style="left:0.00px;top:100.50px;width:100.50px;height:126.30px;background:#fff"></div>
<div style="left:0.00px;top:207.40px;width:100.50px;height:10.30px;background:#cce8ff"></div>
<svg style="left:1.50px;top:89.70px" width="9" height="9" viewBox="0 0 16 16"><path d="M1.5 15.5V6L6 3.5V15.5M6 8.5L12 8V15.5M1.5 15.5H13" fill="#e3ebf5" stroke="#8ea8ca" stroke-width="1.1"/><path d="M3 8V14M8.5 10V14M10 10V14" stroke="#9fb4d2" stroke-width="0.8"/><path d="M13 1V7M10 4H16" stroke="#3f6fb0" stroke-width="1.6"/></svg>
<svg style="left:15.00px;top:89.70px" width="9" height="9" viewBox="0 0 16 16"><path d="M1.5 15.5V6L6 3.5V15.5M6 8.5L12 8V15.5M1.5 15.5H13" fill="#e3ebf5" stroke="#8ea8ca" stroke-width="1.1"/><path d="M3 8V14M8.5 10V14M10 10V14" stroke="#9fb4d2" stroke-width="0.8"/><path d="M8 11L14 2L16 3.5L10 12Z" fill="#4a7ac0"/></svg>
<svg style="left:28.50px;top:89.70px" width="9" height="9" viewBox="0 0 16 16"><path d="M1.5 15.5V6L6 3.5V15.5M6 8.5L12 8V15.5M1.5 15.5H13" fill="#e3ebf5" stroke="#8ea8ca" stroke-width="1.1"/><path d="M3 8V14M8.5 10V14M10 10V14" stroke="#9fb4d2" stroke-width="0.8"/><circle cx="11.5" cy="5" r="4" fill="#fff" stroke="#7f9fc4" stroke-width="1.2"/></svg>
<svg style="left:41.80px;top:89.70px" width="9" height="9" viewBox="0 0 16 16"><path d="M1.5 15.5V6L6 3.5V15.5M6 8.5L12 8V15.5M1.5 15.5H13" fill="#e3ebf5" stroke="#8ea8ca" stroke-width="1.1"/><path d="M3 8V14M8.5 10V14M10 10V14" stroke="#9fb4d2" stroke-width="0.8"/><rect x="11" y="0.5" width="5" height="5" fill="#e03a3a"/></svg>
<svg style="left:55.50px;top:89.70px" width="9" height="9" viewBox="0 0 16 16"><path d="M2 13Q8 9 14 13" fill="none" stroke="#4a7ac0" stroke-width="1.6"/><circle cx="9" cy="5" r="2.5" fill="#4a7ac0"/><path d="M9 7V12" stroke="#4a7ac0" stroke-width="1.4"/><path d="M1 15H15" stroke="#8ea8ca" stroke-width="1"/></svg>
<div style="left:68.50px;top:89.50px;width:0.60px;height:9.50px;background:#d0d0d0"></div>
<svg style="left:71.50px;top:89.50px" width="9" height="9" viewBox="0 0 16 16"><rect x="2" y="5" width="12" height="8" rx="1.5" fill="none" stroke="#8fa9cc" stroke-width="1.2"/><circle cx="8" cy="9" r="2.2" fill="none" stroke="#8fa9cc" stroke-width="1"/></svg>
<svg style="left:85.00px;top:89.50px" width="9" height="9" viewBox="0 0 16 16"><rect x="2" y="5" width="12" height="8" rx="1.5" fill="none" stroke="#8fa9cc" stroke-width="1.2"/><circle cx="8" cy="9" r="2.2" fill="none" stroke="#8fa9cc" stroke-width="1"/></svg>
<svg style="left:4.00px;top:104.40px" width="6.0" height="3.6" viewBox="0 0 6 3.6"><path d="M0.6 0.6L3 3L5.4 0.6" fill="none" stroke="#444" stroke-width="1.25"/></svg>
<div class="t b" style="left:14.00px;top:101.40px;color:#333">Plantas</div>
<div class="t" style="left:23.50px;top:112.07px;">Edificio 1 - Sobre cubierta</div>
<div class="t" style="left:23.50px;top:122.74px;">Edificio 1 - Cubierta</div>
<div class="t" style="left:23.50px;top:133.41px;">Edificio 2 - Cubierta</div>
<div class="t" style="left:23.50px;top:144.08px;">Edificio 1 - Planta 1</div>
<div class="t" style="left:23.50px;top:154.75px;">Edificio 2 - Primera planta</div>
<div class="t" style="left:23.50px;top:165.42px;">Edificio 1 - Planta Baja</div>
<div class="t" style="left:23.50px;top:176.09px;">Edificio 1 - Terreno</div>
<div class="t" style="left:23.50px;top:186.76px;">Edificio 2 - Planta baja</div>
<svg style="left:4.00px;top:200.43px" width="6.0" height="3.6" viewBox="0 0 6 3.6"><path d="M0.6 0.6L3 3L5.4 0.6" fill="none" stroke="#444" stroke-width="1.25"/></svg>
<div class="t b" style="left:14.00px;top:197.43px;color:#333">Vistas 3D</div>
<div class="t" style="left:23.50px;top:208.10px;">3D</div>
<div style="left:0.00px;top:226.80px;width:100.50px;height:4.30px;background:#f0f0f0"></div>
<svg style="left:72.00px;top:227.80px" width="8" height="2" viewBox="0 0 8 2"><path d="M0.5 1h1M2.5 1h1M4.5 1h1M6.5 1h1" stroke="#999" stroke-width="0.8"/></svg>
<div style="left:0.00px;top:231.10px;width:100.50px;height:9.50px;background:#d9d9d9"></div>
<div class="t" style="left:1.60px;top:231.25px;color:#2a2a2a">Niveles</div>
<div style="left:0.00px;top:240.60px;width:100.50px;height:13.30px;background:#f0f0f0"></div>
<div style="left:0.50px;top:241.50px;width:6.50px;height:11.80px;background:#fafafa;border:0.5px solid #ddd"></div>
<svg style="left:2.00px;top:245.00px" width="3" height="4.5" viewBox="0 0 3 4.5"><path d="M3 0L0 2.25L3 4.5Z" fill="#333"/></svg>
<svg style="left:10.50px;top:242.50px" width="9" height="9" viewBox="0 0 16 16"><rect x="2" y="1" width="6" height="13" fill="none" stroke="#6a8fbf" stroke-width="1"/><path d="M2 5H8M2 9H8" stroke="#6a8fbf" stroke-width="1"/><circle cx="11" cy="11" r="3.5" fill="#2a5a9a"/><path d="M11 9V13M9 11H13" stroke="#fff" stroke-width="1"/><path d="M1 10V15" stroke="#3a3" stroke-width="1.5"/></svg>
<svg style="left:22.50px;top:242.50px" width="9" height="9" viewBox="0 0 16 16"><path d="M1 8A6 6 0 0 1 14 7" fill="none" stroke="#7f9fc4" stroke-width="1.5"/><rect x="1" y="8" width="9" height="6" fill="none" stroke="#7f9fc4" stroke-width="1"/><circle cx="11" cy="11" r="3.5" fill="#2a5a9a"/><path d="M11 9V13M9 11H13" stroke="#fff" stroke-width="1"/></svg>
<svg style="left:35.00px;top:242.50px" width="9" height="9" viewBox="0 0 16 16"><path d="M2 14L4 10L12 2L14 4L6 12Z" fill="#5a9ae0" stroke="#3a7ac0" stroke-width="0.6"/></svg>
<svg style="left:49.60px;top:243.00px" width="8" height="8" viewBox="0 0 16 16"><path d="M2 2L14 14M14 2L2 14" stroke="#b8b8b8" stroke-width="1.6"/></svg>
<svg style="left:62.80px;top:244.80px" width="8" height="4.6" viewBox="0 0 9 5"><path d="M0.5 5L4.5 0.5L8.5 5Z" fill="#a8a8a8"/></svg>
<svg style="left:76.50px;top:244.80px" width="8" height="4.6" viewBox="0 0 9 5"><path d="M0.5 0.5L4.5 5L8.5 0.5Z" fill="#333"/></svg>
<div style="left:89.20px;top:242.00px;width:0.60px;height:10.50px;background:#c8c8c8"></div>
<svg style="left:93.50px;top:242.50px" width="8" height="9" viewBox="0 0 16 16"><path d="M2 14Q1 9 6 4L10 1L9 8L6 14Z" fill="#1f4f8f"/></svg>
<div style="left:0.00px;top:253.90px;width:100.50px;height:102.40px;background:#fff"></div>
<div style="left:0.00px;top:253.90px;width:100.50px;height:10.60px;background:#cce8ff"></div>
<svg style="left:4.00px;top:257.80px" width="6.0" height="3.6" viewBox="0 0 6 3.6"><path d="M0.6 0.6L3 3L5.4 0.6" fill="none" stroke="#444" stroke-width="1.25"/></svg>
<div class="t b" style="left:13.40px;top:254.80px;color:#1f3f7a">Edificio 1</div>
<div class="t" style="left:23.60px;top:265.47px;color:#3a5a9a">Sobre cubierta</div>
<div class="t" style="left:70.90px;top:265.47px;color:#3a5a9a">11.7000</div>
<div class="t" style="left:23.60px;top:276.14px;color:#3a5a9a">Cubierta</div>
<div class="t" style="left:70.90px;top:276.14px;color:#3a5a9a">8.7000</div>
<div class="t" style="left:23.60px;top:286.81px;color:#3a5a9a">Planta 1</div>
<div class="t" style="left:70.90px;top:286.81px;color:#3a5a9a">4.7000</div>
<div class="t" style="left:23.60px;top:297.48px;color:#3a5a9a">Planta Baja</div>
<div class="t" style="left:70.90px;top:297.48px;color:#3a5a9a">0.0000</div>
<div class="t" style="left:23.60px;top:308.15px;color:#3a5a9a">Terreno</div>
<div class="t" style="left:70.90px;top:308.15px;color:#3a5a9a">-0.1000</div>
<svg style="left:4.00px;top:321.82px" width="6.0" height="3.6" viewBox="0 0 6 3.6"><path d="M0.6 0.6L3 3L5.4 0.6" fill="none" stroke="#444" stroke-width="1.25"/></svg>
<div class="t b" style="left:13.40px;top:318.82px;color:#1f3f7a">Edificio 2</div>
<div class="t" style="left:23.60px;top:329.49px;color:#3a5a9a">Cubierta</div>
<div class="t" style="left:70.90px;top:329.49px;color:#3a5a9a">8.6500</div>
<div class="t" style="left:23.60px;top:340.16px;color:#3a5a9a">Primera planta</div>
<div class="t" style="left:70.90px;top:340.16px;color:#3a5a9a">4.6500</div>
<div class="t" style="left:23.60px;top:350.83px;color:#3a5a9a">Planta baja</div>
<div class="t" style="left:70.90px;top:350.83px;color:#3a5a9a">-0.2000</div>
<div style="left:0.00px;top:356.30px;width:100.50px;height:3.80px;background:#f0f0f0"></div>
<svg style="left:72.00px;top:357.00px" width="8" height="2" viewBox="0 0 8 2"><path d="M0.5 1h1M2.5 1h1M4.5 1h1M6.5 1h1" stroke="#999" stroke-width="0.8"/></svg>
<div style="left:0.00px;top:359.90px;width:100.50px;height:10.90px;background:#d9d9d9"></div>
<div class="t" style="left:1.60px;top:360.75px;color:#2a2a2a">Elementos leídos</div>
<div style="left:0.00px;top:370.80px;width:100.50px;height:12.80px;background:#f0f0f0"></div>
<svg style="left:2.00px;top:372.50px" width="9" height="9" viewBox="0 0 16 16"><circle cx="3" cy="3" r="2" fill="none" stroke="#5a7fb8" stroke-width="1.2"/><circle cx="3" cy="13" r="2" fill="none" stroke="#5a7fb8" stroke-width="1.2"/><path d="M3 5V11M3 8H13M13 3V13" stroke="#5a7fb8" stroke-width="1.3"/></svg>
<svg style="left:15.00px;top:372.50px" width="9" height="9" viewBox="0 0 16 16"><rect x="1" y="1" width="14" height="14" fill="none" stroke="#7f9fc4" stroke-width="1.2"/><path d="M8 1V15M1 8H15" stroke="#7f9fc4" stroke-width="1.2"/></svg>
<svg style="left:28.50px;top:372.50px" width="9" height="9" viewBox="0 0 16 16"><rect x="1" y="1" width="14" height="14" fill="none" stroke="#7f9fc4" stroke-width="1.2"/><path d="M8 1V15M1 8H15" stroke="#7f9fc4" stroke-width="1.2"/></svg>
<svg style="left:41.50px;top:372.50px" width="9" height="9" viewBox="0 0 16 16"><path d="M2 6L8 3L14 6V10L8 13L2 10Z" fill="none" stroke="#7f9fc4" stroke-width="1.2"/><circle cx="10" cy="10" r="2.5" fill="#2a5a9a"/></svg>
<svg style="left:54.50px;top:372.50px" width="9" height="9" viewBox="0 0 16 16"><rect x="6" y="5" width="4" height="10" rx="1" fill="none" stroke="#5a7fb8" stroke-width="1.3"/><circle cx="8" cy="2" r="1.3" fill="#5a7fb8"/></svg>
<div style="left:0.00px;top:383.60px;width:100.50px;height:156.20px;background:#fff"></div>
<svg style="left:5.00px;top:386.20px" width="3.6" height="6.0" viewBox="0 0 3.6 6"><path d="M0.6 0.6L3 3L0.6 5.4" fill="none" stroke="#444" stroke-width="1.25"/></svg>
<svg style="left:12.50px;top:384.50px" width="9" height="9" viewBox="0 0 16 16"><path d="M4 2H12V14H4Z" fill="none" stroke="#2a5a9a" stroke-width="1.3"/><path d="M6 5H10M6 8H10" stroke="#2a5a9a" stroke-width="1.2"/><path d="M2 12L7 15" stroke="#2a5a9a" stroke-width="1.5"/></svg>
<div class="t b" style="left:23.80px;top:384.40px;color:#333">Modelos</div>
<svg style="left:4.00px;top:398.07px" width="6.0" height="3.6" viewBox="0 0 6 3.6"><path d="M0.6 0.6L3 3L5.4 0.6" fill="none" stroke="#444" stroke-width="1.25"/></svg>
<svg style="left:12.50px;top:395.17px" width="9" height="9" viewBox="0 0 16 16"><path d="M8 2V7M3 7H13M3 7V11M13 7V11M8 7V11" stroke="#2a5a9a" stroke-width="1.2"/><rect x="1" y="11" width="4" height="4" fill="#2a5a9a"/><rect x="6" y="11" width="4" height="4" fill="#2a5a9a"/><rect x="11" y="11" width="4" height="4" fill="#2a5a9a"/><rect x="6" y="0.5" width="4" height="3" fill="#2a5a9a"/></svg>
<div class="t b" style="left:23.80px;top:395.07px;color:#333">Categorías</div>
<div class="t" style="left:23.50px;top:405.74px;">Aparatos sanitarios</div>
<div class="t" style="left:23.50px;top:416.41px;">Barandillas</div>
<div class="t" style="left:23.50px;top:427.08px;">Barras de armado</div>
<div class="t" style="left:23.50px;top:437.75px;">Celosías</div>
<div class="t" style="left:23.50px;top:448.42px;">Cimentaciones</div>
<div class="t" style="left:23.50px;top:459.09px;">Contadores</div>
<div class="t" style="left:23.50px;top:469.76px;">Desconocida</div>
<div class="t" style="left:23.50px;top:480.43px;">Edificios próximos y otr...</div>
<div class="t" style="left:23.50px;top:491.10px;">Elemento del modelo a...</div>
<div class="t" style="left:23.50px;top:501.77px;">Escaleras</div>
<div class="t" style="left:23.50px;top:512.44px;">Fachadas</div>
<div class="t" style="left:23.50px;top:523.11px;">Forjados</div>
<div class="t" style="left:23.50px;top:533.78px;">Mapas</div>
<div style="left:920.00px;top:77.30px;width:104.00px;height:10.60px;background:#d9d9d9"></div>
<svg style="left:1004.50px;top:80.50px" width="6" height="4" viewBox="0 0 6 3.6"><path d="M0.6 0.6L3 3L5.4 0.6" fill="none" stroke="#222" stroke-width="1.45"/></svg>
<svg style="left:1016.00px;top:79.50px" width="6" height="6" viewBox="0 0 6 6"><path d="M0.5 0.5L5.5 5.5M5.5 0.5L0.5 5.5" stroke="#222" stroke-width="0.9"/></svg>
<div style="left:920.00px;top:87.90px;width:104.00px;height:12.30px;background:#f0f0f0"></div>
<div style="left:920.00px;top:100.20px;width:95.00px;height:204.40px;background:#fff"></div>
<div style="left:1014.80px;top:100.20px;width:9.20px;height:204.40px;background:#f3f3f3"></div>
<div style="left:1019.00px;top:110.00px;width:0.90px;height:121.00px;background:#8a8a8a"></div>
<div style="left:920.00px;top:100.20px;width:95.00px;height:11.10px;background:#cce8ff"></div>
<svg style="left:1003.00px;top:101.80px" width="9" height="8" viewBox="0 0 9 8"><path d="M0 4Q4.5 -0.8 9 4Q4.5 8.8 0 4Z" fill="#a3b9d8"/><circle cx="4.5" cy="4" r="2.3" fill="#4f77b0"/><circle cx="4.5" cy="4" r="0.9" fill="#b9cbe3"/></svg>
<svg style="left:1003.00px;top:112.47px" width="9" height="8" viewBox="0 0 9 8"><path d="M0 4Q4.5 -0.8 9 4Q4.5 8.8 0 4Z" fill="#a3b9d8"/><circle cx="4.5" cy="4" r="2.3" fill="#4f77b0"/><circle cx="4.5" cy="4" r="0.9" fill="#b9cbe3"/></svg>
<svg style="left:1003.00px;top:123.14px" width="9" height="8" viewBox="0 0 9 8"><path d="M0.3 4Q4.5 -0.3 8.7 4Q4.5 8.3 0.3 4Z" fill="#e8e8e8"/><circle cx="4.5" cy="4" r="1.8" fill="#b5b5b5"/><path d="M1.5 0.5L8 7.5" stroke="#9a9a9a" stroke-width="0.9"/></svg>
<svg style="left:1003.00px;top:133.81px" width="9" height="8" viewBox="0 0 9 8"><path d="M0.3 4Q4.5 -0.3 8.7 4Q4.5 8.3 0.3 4Z" fill="#e8e8e8"/><circle cx="4.5" cy="4" r="1.8" fill="#b5b5b5"/><path d="M1.5 0.5L8 7.5" stroke="#9a9a9a" stroke-width="0.9"/></svg>
<svg style="left:1003.00px;top:144.48px" width="9" height="8" viewBox="0 0 9 8"><path d="M0.3 4Q4.5 -0.3 8.7 4Q4.5 8.3 0.3 4Z" fill="#e8e8e8"/><circle cx="4.5" cy="4" r="1.8" fill="#b5b5b5"/><path d="M1.5 0.5L8 7.5" stroke="#9a9a9a" stroke-width="0.9"/></svg>
<div class="t" style="left:832.20px;top:143.48px;width:100px;text-align:right;color:#222;transform-origin:100% 50%">a)</div>
<svg style="left:1003.00px;top:155.15px" width="9" height="8" viewBox="0 0 9 8"><path d="M0.3 4Q4.5 -0.3 8.7 4Q4.5 8.3 0.3 4Z" fill="#e8e8e8"/><circle cx="4.5" cy="4" r="1.8" fill="#b5b5b5"/><path d="M1.5 0.5L8 7.5" stroke="#9a9a9a" stroke-width="0.9"/></svg>
<div class="t" style="left:834.60px;top:154.15px;width:100px;text-align:right;color:#222;transform-origin:100% 50%">ón</div>
<svg style="left:1003.00px;top:165.82px" width="9" height="8" viewBox="0 0 9 8"><path d="M0.3 4Q4.5 -0.3 8.7 4Q4.5 8.3 0.3 4Z" fill="#e8e8e8"/><circle cx="4.5" cy="4" r="1.8" fill="#b5b5b5"/><path d="M1.5 0.5L8 7.5" stroke="#9a9a9a" stroke-width="0.9"/></svg>
<div class="t" style="left:843.60px;top:164.82px;width:100px;text-align:right;color:#222;transform-origin:100% 50%">nado)</div>
<svg style="left:1003.00px;top:176.49px" width="9" height="8" viewBox="0 0 9 8"><path d="M0.3 4Q4.5 -0.3 8.7 4Q4.5 8.3 0.3 4Z" fill="#e8e8e8"/><circle cx="4.5" cy="4" r="1.8" fill="#b5b5b5"/><path d="M1.5 0.5L8 7.5" stroke="#9a9a9a" stroke-width="0.9"/></svg>
<svg style="left:1003.00px;top:187.16px" width="9" height="8" viewBox="0 0 9 8"><path d="M0.3 4Q4.5 -0.3 8.7 4Q4.5 8.3 0.3 4Z" fill="#e8e8e8"/><circle cx="4.5" cy="4" r="1.8" fill="#b5b5b5"/><path d="M1.5 0.5L8 7.5" stroke="#9a9a9a" stroke-width="0.9"/></svg>
<svg style="left:1003.00px;top:197.83px" width="9" height="8" viewBox="0 0 9 8"><path d="M0.3 4Q4.5 -0.3 8.7 4Q4.5 8.3 0.3 4Z" fill="#e8e8e8"/><circle cx="4.5" cy="4" r="1.8" fill="#b5b5b5"/><path d="M1.5 0.5L8 7.5" stroke="#9a9a9a" stroke-width="0.9"/></svg>
<div class="t" style="left:829.50px;top:196.83px;width:100px;text-align:right;color:#222;transform-origin:100% 50%">)</div>
<svg style="left:1003.00px;top:208.50px" width="9" height="8" viewBox="0 0 9 8"><path d="M0.3 4Q4.5 -0.3 8.7 4Q4.5 8.3 0.3 4Z" fill="#e8e8e8"/><circle cx="4.5" cy="4" r="1.8" fill="#b5b5b5"/><path d="M1.5 0.5L8 7.5" stroke="#9a9a9a" stroke-width="0.9"/></svg>
<svg style="left:1003.00px;top:219.17px" width="9" height="8" viewBox="0 0 9 8"><path d="M0.3 4Q4.5 -0.3 8.7 4Q4.5 8.3 0.3 4Z" fill="#e8e8e8"/><circle cx="4.5" cy="4" r="1.8" fill="#b5b5b5"/><path d="M1.5 0.5L8 7.5" stroke="#9a9a9a" stroke-width="0.9"/></svg>
<svg style="left:1003.00px;top:229.84px" width="9" height="8" viewBox="0 0 9 8"><path d="M0.3 4Q4.5 -0.3 8.7 4Q4.5 8.3 0.3 4Z" fill="#e8e8e8"/><circle cx="4.5" cy="4" r="1.8" fill="#b5b5b5"/><path d="M1.5 0.5L8 7.5" stroke="#9a9a9a" stroke-width="0.9"/></svg>
<svg style="left:1003.00px;top:240.51px" width="9" height="8" viewBox="0 0 9 8"><path d="M0.3 4Q4.5 -0.3 8.7 4Q4.5 8.3 0.3 4Z" fill="#e8e8e8"/><circle cx="4.5" cy="4" r="1.8" fill="#b5b5b5"/><path d="M1.5 0.5L8 7.5" stroke="#9a9a9a" stroke-width="0.9"/></svg>
<div class="t" style="left:842.00px;top:239.51px;width:100px;text-align:right;color:#222;transform-origin:100% 50%">lanta</div>
<svg style="left:1003.00px;top:251.18px" width="9" height="8" viewBox="0 0 9 8"><path d="M0.3 4Q4.5 -0.3 8.7 4Q4.5 8.3 0.3 4Z" fill="#e8e8e8"/><circle cx="4.5" cy="4" r="1.8" fill="#b5b5b5"/><path d="M1.5 0.5L8 7.5" stroke="#9a9a9a" stroke-width="0.9"/></svg>
<div class="t" style="left:850.20px;top:250.18px;width:100px;text-align:right;color:#222;transform-origin:100% 50%">2 planta</div>
<svg style="left:1003.00px;top:261.85px" width="9" height="8" viewBox="0 0 9 8"><path d="M0.3 4Q4.5 -0.3 8.7 4Q4.5 8.3 0.3 4Z" fill="#e8e8e8"/><circle cx="4.5" cy="4" r="1.8" fill="#b5b5b5"/><path d="M1.5 0.5L8 7.5" stroke="#9a9a9a" stroke-width="0.9"/></svg>
<div class="t" style="left:842.30px;top:260.85px;width:100px;text-align:right;color:#222;transform-origin:100% 50%">bierta</div>
<svg style="left:1003.00px;top:272.52px" width="9" height="8" viewBox="0 0 9 8"><path d="M0.3 4Q4.5 -0.3 8.7 4Q4.5 8.3 0.3 4Z" fill="#e8e8e8"/><circle cx="4.5" cy="4" r="1.8" fill="#b5b5b5"/><path d="M1.5 0.5L8 7.5" stroke="#9a9a9a" stroke-width="0.9"/></svg>
<svg style="left:1003.00px;top:283.19px" width="9" height="8" viewBox="0 0 9 8"><path d="M0.3 4Q4.5 -0.3 8.7 4Q4.5 8.3 0.3 4Z" fill="#e8e8e8"/><circle cx="4.5" cy="4" r="1.8" fill="#b5b5b5"/><path d="M1.5 0.5L8 7.5" stroke="#9a9a9a" stroke-width="0.9"/></svg>
<svg style="left:1003.00px;top:293.86px" width="9" height="8" viewBox="0 0 9 8"><path d="M0.3 4Q4.5 -0.3 8.7 4Q4.5 8.3 0.3 4Z" fill="#e8e8e8"/><circle cx="4.5" cy="4" r="1.8" fill="#b5b5b5"/><path d="M1.5 0.5L8 7.5" stroke="#9a9a9a" stroke-width="0.9"/></svg>
<div class="t" style="left:844.50px;top:292.86px;width:100px;text-align:right;color:#222;transform-origin:100% 50%">miento</div>
<div style="left:920.00px;top:304.60px;width:104.00px;height:5.00px;background:#f0f0f0"></div>
<div style="left:920.00px;top:309.60px;width:104.00px;height:9.80px;background:#d9d9d9"></div>
<svg style="left:1004.50px;top:312.50px" width="6" height="4" viewBox="0 0 6 3.6"><path d="M0.6 0.6L3 3L5.4 0.6" fill="none" stroke="#222" stroke-width="1.45"/></svg>
<svg style="left:1016.00px;top:311.50px" width="6" height="6" viewBox="0 0 6 6"><path d="M0.5 0.5L5.5 5.5M5.5 0.5L0.5 5.5" stroke="#222" stroke-width="0.9"/></svg>
<div style="left:920.00px;top:319.40px;width:95.00px;height:220.40px;background:#fff"></div>
<div style="left:1015.00px;top:319.40px;width:9.00px;height:220.40px;background:#f3f3f3"></div>
<div style="left:1018.60px;top:330.70px;width:0.90px;height:47.00px;background:#8a8a8a"></div>
<svg style="left:987.50px;top:322.50px" width="9" height="8" viewBox="0 0 9 8"><path d="M0 4Q4.5 -0.8 9 4Q4.5 8.8 0 4Z" fill="#a3b9d8"/><circle cx="4.5" cy="4" r="2.3" fill="#4f77b0"/><circle cx="4.5" cy="4" r="0.9" fill="#b9cbe3"/></svg>
<svg style="left:1002.60px;top:322.10px" width="9" height="9" viewBox="0 0 9 9"><path d="M2.4 4.4V2.6A2 2 0 0 1 6.4 2.6V3" fill="none" stroke="#7f8fa8" stroke-width="1.1"/><rect x="0.8" y="4.2" width="7" height="4.6" rx="0.6" fill="#7f8fa8"/><rect x="3.8" y="5.9" width="1" height="1" fill="#dde3ec"/></svg>
<svg style="left:987.50px;top:333.17px" width="9" height="8" viewBox="0 0 9 8"><path d="M0 4Q4.5 -0.8 9 4Q4.5 8.8 0 4Z" fill="#a3b9d8"/><circle cx="4.5" cy="4" r="2.3" fill="#4f77b0"/><circle cx="4.5" cy="4" r="0.9" fill="#b9cbe3"/></svg>
<svg style="left:1002.60px;top:332.77px" width="9" height="9" viewBox="0 0 9 9"><path d="M2.4 4.4V2.6A2 2 0 0 1 6.4 2.6V3" fill="none" stroke="#7f8fa8" stroke-width="1.1"/><rect x="0.8" y="4.2" width="7" height="4.6" rx="0.6" fill="#7f8fa8"/><rect x="3.8" y="5.9" width="1" height="1" fill="#dde3ec"/></svg>
<svg style="left:987.50px;top:343.84px" width="9" height="8" viewBox="0 0 9 8"><path d="M0 4Q4.5 -0.8 9 4Q4.5 8.8 0 4Z" fill="#a3b9d8"/><circle cx="4.5" cy="4" r="2.3" fill="#4f77b0"/><circle cx="4.5" cy="4" r="0.9" fill="#b9cbe3"/></svg>
<svg style="left:1002.60px;top:343.44px" width="9" height="9" viewBox="0 0 9 9"><path d="M2.4 4.4V2.6A2 2 0 0 1 6.4 2.6V3" fill="none" stroke="#7f8fa8" stroke-width="1.1"/><rect x="0.8" y="4.2" width="7" height="4.6" rx="0.6" fill="#7f8fa8"/><rect x="3.8" y="5.9" width="1" height="1" fill="#dde3ec"/></svg>
<svg style="left:987.50px;top:354.51px" width="9" height="8" viewBox="0 0 9 8"><path d="M0 4Q4.5 -0.8 9 4Q4.5 8.8 0 4Z" fill="#a3b9d8"/><circle cx="4.5" cy="4" r="2.3" fill="#4f77b0"/><circle cx="4.5" cy="4" r="0.9" fill="#b9cbe3"/></svg>
<svg style="left:1002.60px;top:354.11px" width="9" height="9" viewBox="0 0 9 9"><path d="M2.4 4.4V2.6A2 2 0 0 1 6.4 2.6V3" fill="none" stroke="#7f8fa8" stroke-width="1.1"/><rect x="0.8" y="4.2" width="7" height="4.6" rx="0.6" fill="#7f8fa8"/><rect x="3.8" y="5.9" width="1" height="1" fill="#dde3ec"/></svg>
<div class="t" style="left:811.20px;top:353.51px;width:150px;text-align:right;color:#222;transform-origin:100% 50%">de elevación</div>
<svg style="left:987.50px;top:365.18px" width="9" height="8" viewBox="0 0 9 8"><path d="M0 4Q4.5 -0.8 9 4Q4.5 8.8 0 4Z" fill="#a3b9d8"/><circle cx="4.5" cy="4" r="2.3" fill="#4f77b0"/><circle cx="4.5" cy="4" r="0.9" fill="#b9cbe3"/></svg>
<svg style="left:1002.60px;top:364.78px" width="9" height="9" viewBox="0 0 9 9"><path d="M2.4 4.4V2.6A2 2 0 0 1 6.4 2.6V3" fill="none" stroke="#7f8fa8" stroke-width="1.1"/><rect x="0.8" y="4.2" width="7" height="4.6" rx="0.6" fill="#7f8fa8"/><rect x="3.8" y="5.9" width="1" height="1" fill="#dde3ec"/></svg>
<svg style="left:987.50px;top:375.85px" width="9" height="8" viewBox="0 0 9 8"><path d="M0 4Q4.5 -0.8 9 4Q4.5 8.8 0 4Z" fill="#a3b9d8"/><circle cx="4.5" cy="4" r="2.3" fill="#4f77b0"/><circle cx="4.5" cy="4" r="0.9" fill="#b9cbe3"/></svg>
<svg style="left:1002.60px;top:375.45px" width="9" height="9" viewBox="0 0 9 9"><path d="M2.4 4.4V2.6A2 2 0 0 1 6.4 2.6V3" fill="none" stroke="#7f8fa8" stroke-width="1.1"/><rect x="0.8" y="4.2" width="7" height="4.6" rx="0.6" fill="#7f8fa8"/><rect x="3.8" y="5.9" width="1" height="1" fill="#dde3ec"/></svg>
<div class="t" style="left:807.90px;top:374.85px;width:150px;text-align:right;color:#222;transform-origin:100% 50%">de fachada</div>
<svg style="left:987.50px;top:386.52px" width="9" height="8" viewBox="0 0 9 8"><path d="M0 4Q4.5 -0.8 9 4Q4.5 8.8 0 4Z" fill="#a3b9d8"/><circle cx="4.5" cy="4" r="2.3" fill="#4f77b0"/><circle cx="4.5" cy="4" r="0.9" fill="#b9cbe3"/></svg>
<svg style="left:1002.60px;top:386.12px" width="9" height="9" viewBox="0 0 9 9"><path d="M2.4 4.4V2.6A2 2 0 0 1 6.4 2.6V3" fill="none" stroke="#7f8fa8" stroke-width="1.1"/><rect x="0.8" y="4.2" width="7" height="4.6" rx="0.6" fill="#7f8fa8"/><rect x="3.8" y="5.9" width="1" height="1" fill="#dde3ec"/></svg>
<div class="t" style="left:791.80px;top:385.52px;width:150px;text-align:right;color:#222;transform-origin:100% 50%">izada</div>
<svg style="left:987.50px;top:397.19px" width="9" height="8" viewBox="0 0 9 8"><path d="M0 4Q4.5 -0.8 9 4Q4.5 8.8 0 4Z" fill="#a3b9d8"/><circle cx="4.5" cy="4" r="2.3" fill="#4f77b0"/><circle cx="4.5" cy="4" r="0.9" fill="#b9cbe3"/></svg>
<svg style="left:1002.60px;top:396.79px" width="9" height="9" viewBox="0 0 9 9"><path d="M2.4 4.4V2.6A2 2 0 0 1 6.4 2.6V3" fill="none" stroke="#7f8fa8" stroke-width="1.1"/><rect x="0.8" y="4.2" width="7" height="4.6" rx="0.6" fill="#7f8fa8"/><rect x="3.8" y="5.9" width="1" height="1" fill="#dde3ec"/></svg>
<div class="t" style="left:791.80px;top:396.19px;width:150px;text-align:right;color:#222;transform-origin:100% 50%">ndida</div>
<svg style="left:987.50px;top:407.86px" width="9" height="8" viewBox="0 0 9 8"><path d="M0 4Q4.5 -0.8 9 4Q4.5 8.8 0 4Z" fill="#a3b9d8"/><circle cx="4.5" cy="4" r="2.3" fill="#4f77b0"/><circle cx="4.5" cy="4" r="0.9" fill="#b9cbe3"/></svg>
<svg style="left:1002.60px;top:407.46px" width="9" height="9" viewBox="0 0 9 9"><path d="M2.4 4.4V2.6A2 2 0 0 1 6.4 2.6V3" fill="none" stroke="#7f8fa8" stroke-width="1.1"/><rect x="0.8" y="4.2" width="7" height="4.6" rx="0.6" fill="#7f8fa8"/><rect x="3.8" y="5.9" width="1" height="1" fill="#dde3ec"/></svg>
<svg style="left:987.50px;top:418.53px" width="9" height="8" viewBox="0 0 9 8"><path d="M0 4Q4.5 -0.8 9 4Q4.5 8.8 0 4Z" fill="#a3b9d8"/><circle cx="4.5" cy="4" r="2.3" fill="#4f77b0"/><circle cx="4.5" cy="4" r="0.9" fill="#b9cbe3"/></svg>
<svg style="left:1002.60px;top:418.13px" width="9" height="9" viewBox="0 0 9 9"><path d="M2.4 4.4V2.6A2 2 0 0 1 6.4 2.6V3" fill="none" stroke="#7f8fa8" stroke-width="1.1"/><rect x="0.8" y="4.2" width="7" height="4.6" rx="0.6" fill="#7f8fa8"/><rect x="3.8" y="5.9" width="1" height="1" fill="#dde3ec"/></svg>
<svg style="left:987.50px;top:429.20px" width="9" height="8" viewBox="0 0 9 8"><path d="M0 4Q4.5 -0.8 9 4Q4.5 8.8 0 4Z" fill="#a3b9d8"/><circle cx="4.5" cy="4" r="2.3" fill="#4f77b0"/><circle cx="4.5" cy="4" r="0.9" fill="#b9cbe3"/></svg>
<svg style="left:1002.60px;top:428.80px" width="9" height="9" viewBox="0 0 9 9"><path d="M2.4 4.4V2.6A2 2 0 0 1 6.4 2.6V3" fill="none" stroke="#7f8fa8" stroke-width="1.1"/><rect x="0.8" y="4.2" width="7" height="4.6" rx="0.6" fill="#7f8fa8"/><rect x="3.8" y="5.9" width="1" height="1" fill="#dde3ec"/></svg>
<div class="t" style="left:782.40px;top:428.20px;width:150px;text-align:right;color:#222;transform-origin:100% 50%">as</div>
<svg style="left:987.50px;top:439.87px" width="9" height="8" viewBox="0 0 9 8"><path d="M0 4Q4.5 -0.8 9 4Q4.5 8.8 0 4Z" fill="#a3b9d8"/><circle cx="4.5" cy="4" r="2.3" fill="#4f77b0"/><circle cx="4.5" cy="4" r="0.9" fill="#b9cbe3"/></svg>
<svg style="left:1002.60px;top:439.47px" width="9" height="9" viewBox="0 0 9 9"><path d="M2.4 4.4V2.6A2 2 0 0 1 6.4 2.6V3" fill="none" stroke="#7f8fa8" stroke-width="1.1"/><rect x="0.8" y="4.2" width="7" height="4.6" rx="0.6" fill="#7f8fa8"/><rect x="3.8" y="5.9" width="1" height="1" fill="#dde3ec"/></svg>
<div class="t" style="left:826.70px;top:438.87px;width:150px;text-align:right;color:#222;transform-origin:100% 50%">e brazo articulado</div>
<svg style="left:987.50px;top:450.54px" width="9" height="8" viewBox="0 0 9 8"><path d="M0 4Q4.5 -0.8 9 4Q4.5 8.8 0 4Z" fill="#a3b9d8"/><circle cx="4.5" cy="4" r="2.3" fill="#4f77b0"/><circle cx="4.5" cy="4" r="0.9" fill="#b9cbe3"/></svg>
<svg style="left:1002.60px;top:450.14px" width="9" height="9" viewBox="0 0 9 9"><path d="M2.4 4.4V2.6A2 2 0 0 1 6.4 2.6V3" fill="none" stroke="#7f8fa8" stroke-width="1.1"/><rect x="0.8" y="4.2" width="7" height="4.6" rx="0.6" fill="#7f8fa8"/><rect x="3.8" y="5.9" width="1" height="1" fill="#dde3ec"/></svg>
<div class="t" style="left:830.80px;top:449.54px;width:150px;text-align:right;color:#222;transform-origin:100% 50%">e brazo telescópico</div>
<svg style="left:987.50px;top:461.21px" width="9" height="8" viewBox="0 0 9 8"><path d="M0 4Q4.5 -0.8 9 4Q4.5 8.8 0 4Z" fill="#a3b9d8"/><circle cx="4.5" cy="4" r="2.3" fill="#4f77b0"/><circle cx="4.5" cy="4" r="0.9" fill="#b9cbe3"/></svg>
<svg style="left:1002.60px;top:460.81px" width="9" height="9" viewBox="0 0 9 9"><path d="M2.4 4.4V2.6A2 2 0 0 1 6.4 2.6V3" fill="none" stroke="#7f8fa8" stroke-width="1.1"/><rect x="0.8" y="4.2" width="7" height="4.6" rx="0.6" fill="#7f8fa8"/><rect x="3.8" y="5.9" width="1" height="1" fill="#dde3ec"/></svg>
<div class="t" style="left:811.00px;top:460.21px;width:150px;text-align:right;color:#222;transform-origin:100% 50%">ora de tijera</div>
<svg style="left:987.50px;top:471.88px" width="9" height="8" viewBox="0 0 9 8"><path d="M0 4Q4.5 -0.8 9 4Q4.5 8.8 0 4Z" fill="#a3b9d8"/><circle cx="4.5" cy="4" r="2.3" fill="#4f77b0"/><circle cx="4.5" cy="4" r="0.9" fill="#b9cbe3"/></svg>
<svg style="left:1002.60px;top:471.48px" width="9" height="9" viewBox="0 0 9 9"><path d="M2.4 4.4V2.6A2 2 0 0 1 6.4 2.6V3" fill="none" stroke="#7f8fa8" stroke-width="1.1"/><rect x="0.8" y="4.2" width="7" height="4.6" rx="0.6" fill="#7f8fa8"/><rect x="3.8" y="5.9" width="1" height="1" fill="#dde3ec"/></svg>
<div class="t" style="left:784.70px;top:470.88px;width:150px;text-align:right;color:#222;transform-origin:100% 50%">no</div>
<svg style="left:987.50px;top:482.55px" width="9" height="8" viewBox="0 0 9 8"><path d="M0 4Q4.5 -0.8 9 4Q4.5 8.8 0 4Z" fill="#a3b9d8"/><circle cx="4.5" cy="4" r="2.3" fill="#4f77b0"/><circle cx="4.5" cy="4" r="0.9" fill="#b9cbe3"/></svg>
<svg style="left:1002.60px;top:482.15px" width="9" height="9" viewBox="0 0 9 9"><path d="M2.4 4.4V2.6A2 2 0 0 1 6.4 2.6V3" fill="none" stroke="#7f8fa8" stroke-width="1.1"/><rect x="0.8" y="4.2" width="7" height="4.6" rx="0.6" fill="#7f8fa8"/><rect x="3.8" y="5.9" width="1" height="1" fill="#dde3ec"/></svg>
<div class="t" style="left:809.90px;top:481.55px;width:150px;text-align:right;color:#222;transform-origin:100% 50%">edificación</div>
<svg style="left:987.50px;top:493.22px" width="9" height="8" viewBox="0 0 9 8"><path d="M0 4Q4.5 -0.8 9 4Q4.5 8.8 0 4Z" fill="#a3b9d8"/><circle cx="4.5" cy="4" r="2.3" fill="#4f77b0"/><circle cx="4.5" cy="4" r="0.9" fill="#b9cbe3"/></svg>
<svg style="left:1002.60px;top:492.82px" width="9" height="9" viewBox="0 0 9 9"><path d="M2.4 4.4V2.6A2 2 0 0 1 6.4 2.6V3" fill="none" stroke="#7f8fa8" stroke-width="1.1"/><rect x="0.8" y="4.2" width="7" height="4.6" rx="0.6" fill="#7f8fa8"/><rect x="3.8" y="5.9" width="1" height="1" fill="#dde3ec"/></svg>
<svg style="left:987.50px;top:503.89px" width="9" height="8" viewBox="0 0 9 8"><path d="M0 4Q4.5 -0.8 9 4Q4.5 8.8 0 4Z" fill="#a3b9d8"/><circle cx="4.5" cy="4" r="2.3" fill="#4f77b0"/><circle cx="4.5" cy="4" r="0.9" fill="#b9cbe3"/></svg>
<svg style="left:1002.60px;top:503.49px" width="9" height="9" viewBox="0 0 9 9"><path d="M2.4 4.4V2.6A2 2 0 0 1 6.4 2.6V3" fill="none" stroke="#7f8fa8" stroke-width="1.1"/><rect x="0.8" y="4.2" width="7" height="4.6" rx="0.6" fill="#7f8fa8"/><rect x="3.8" y="5.9" width="1" height="1" fill="#dde3ec"/></svg>
<div class="t" style="left:829.00px;top:502.89px;width:150px;text-align:right;color:#222;transform-origin:100% 50%">abierto, con me...</div>
<svg style="left:987.50px;top:514.56px" width="9" height="8" viewBox="0 0 9 8"><path d="M0 4Q4.5 -0.8 9 4Q4.5 8.8 0 4Z" fill="#a3b9d8"/><circle cx="4.5" cy="4" r="2.3" fill="#4f77b0"/><circle cx="4.5" cy="4" r="0.9" fill="#b9cbe3"/></svg>
<svg style="left:1002.60px;top:514.16px" width="9" height="9" viewBox="0 0 9 9"><path d="M2.4 4.4V2.6A2 2 0 0 1 6.4 2.6V3" fill="none" stroke="#7f8fa8" stroke-width="1.1"/><rect x="0.8" y="4.2" width="7" height="4.6" rx="0.6" fill="#7f8fa8"/><rect x="3.8" y="5.9" width="1" height="1" fill="#dde3ec"/></svg>
<div class="t" style="left:832.00px;top:513.56px;width:150px;text-align:right;color:#222;transform-origin:100% 50%">jas para cimentac...</div>
<svg style="left:987.50px;top:525.23px" width="9" height="8" viewBox="0 0 9 8"><path d="M0 4Q4.5 -0.8 9 4Q4.5 8.8 0 4Z" fill="#a3b9d8"/><circle cx="4.5" cy="4" r="2.3" fill="#4f77b0"/><circle cx="4.5" cy="4" r="0.9" fill="#b9cbe3"/></svg>
<svg style="left:1002.60px;top:524.83px" width="9" height="9" viewBox="0 0 9 9"><path d="M2.4 4.4V2.6A2 2 0 0 1 6.4 2.6V3" fill="none" stroke="#7f8fa8" stroke-width="1.1"/><rect x="0.8" y="4.2" width="7" height="4.6" rx="0.6" fill="#7f8fa8"/><rect x="3.8" y="5.9" width="1" height="1" fill="#dde3ec"/></svg>
<div class="t" style="left:829.00px;top:524.23px;width:150px;text-align:right;color:#222;transform-origin:100% 50%">jas para instalaci...</div>
<svg style="left:987.50px;top:535.90px" width="9" height="8" viewBox="0 0 9 8"><path d="M0 4Q4.5 -0.8 9 4Q4.5 8.8 0 4Z" fill="#a3b9d8"/><circle cx="4.5" cy="4" r="2.3" fill="#4f77b0"/><circle cx="4.5" cy="4" r="0.9" fill="#b9cbe3"/></svg>
<svg style="left:1002.60px;top:535.50px" width="9" height="9" viewBox="0 0 9 9"><path d="M2.4 4.4V2.6A2 2 0 0 1 6.4 2.6V3" fill="none" stroke="#7f8fa8" stroke-width="1.1"/><rect x="0.8" y="4.2" width="7" height="4.6" rx="0.6" fill="#7f8fa8"/><rect x="3.8" y="5.9" width="1" height="1" fill="#dde3ec"/></svg>
<div class="t" style="left:832.00px;top:534.90px;width:150px;text-align:right;color:#222;transform-origin:100% 50%">Excavación de pozos para cimentac...</div>
<div style="left:101.00px;top:76.80px;width:827.00px;height:460.20px;background:#f0f0f0;border:2.6px solid #2a78cc;box-shadow:0 0 1.5px rgba(39,119,204,0.45)"></div>
<div style="left:101.00px;top:76.80px;width:827.00px;height:16.00px;background:#2e7dce;border-top:1px solid #2470c4;border-bottom:1px solid #2874c8"></div>
<div class="t" style="left:464.60px;top:81.50px;color:#fff">Unidades de obra</div>
<svg style="left:884.00px;top:83.60px" width="6" height="5.6" viewBox="0 0 6 5.6"><rect x="0.5" y="0.5" width="5" height="4.6" rx="0.6" fill="none" stroke="#dfeaf7" stroke-width="0.9"/></svg>
<svg style="left:909.50px;top:83.30px" width="6" height="6" viewBox="0 0 6 6"><path d="M0.5 0.5L5.5 5.5M5.5 0.5L0.5 5.5" stroke="#fff" stroke-width="0.9"/></svg>
<div style="left:108.00px;top:97.60px;width:484.40px;height:410.70px;background:#fff"></div>
<div style="left:582.60px;top:97.60px;width:9.80px;height:410.70px;background:#f1f1f1"></div>
<div style="left:108.00px;top:97.60px;width:474.60px;height:12.90px;background:#f4f3f2"></div>
<div style="left:108.00px;top:110.00px;width:474.60px;height:1.00px;background:#e4e4e4"></div>
<div style="left:582.30px;top:100.10px;width:0.70px;height:8.00px;background:#e2e2e2"></div>
<div style="left:108.00px;top:97.20px;width:484.40px;height:1.00px;background:#dcdcdc"></div>
<div style="left:591.80px;top:97.60px;width:1.00px;height:410.70px;background:#dcdcdc"></div>
<div style="left:107.50px;top:97.60px;width:1.00px;height:410.70px;background:#dcdcdc"></div>
<div style="left:108.00px;top:507.70px;width:484.40px;height:1.00px;background:#dcdcdc"></div>
<div style="left:587.00px;top:108.00px;width:0.90px;height:175.40px;background:#8c8c8c"></div>
<div style="left:136.20px;top:98.60px;width:0.50px;height:12.00px;background:#e2e2e2"></div>
<div class="t" style="left:112.00px;top:99.70px;color:#333">Código</div>
<div class="t" style="left:139.80px;top:99.70px;color:#333">Capítulo</div>
<div style="left:108.50px;top:110.50px;width:474.10px;height:11.27px;background:#eeeeee"></div>
<div class="t" style="left:112.00px;top:111.23px;color:#333;-webkit-text-stroke:0.3px #333">0</div>
<svg style="left:141.40px;top:114.23px" width="6.0" height="3.6" viewBox="0 0 6 3.6"><path d="M0.6 0.6L3 3L5.4 0.6" fill="none" stroke="#333" stroke-width="1.25"/></svg>
<div class="t b" style="left:150.00px;top:111.23px;color:#3a3a3a">Actuaciones previas</div>
<div style="left:108.50px;top:121.17px;width:474.10px;height:11.27px;background:#eeeeee"></div>
<div class="t" style="left:112.00px;top:121.90px;color:#333;-webkit-text-stroke:0.3px #333">0X</div>
<svg style="left:151.40px;top:124.90px" width="6.0" height="3.6" viewBox="0 0 6 3.6"><path d="M0.6 0.6L3 3L5.4 0.6" fill="none" stroke="#333" stroke-width="1.25"/></svg>
<div class="t b" style="left:160.00px;top:121.90px;color:#3a3a3a">Andamios y maquinaria de elevación</div>
<div style="left:108.50px;top:131.83px;width:474.10px;height:11.27px;background:#eeeeee"></div>
<div class="t" style="left:112.00px;top:132.57px;color:#333;-webkit-text-stroke:0.3px #333">0XA</div>
<svg style="left:161.40px;top:135.57px" width="6.0" height="3.6" viewBox="0 0 6 3.6"><path d="M0.6 0.6L3 3L5.4 0.6" fill="none" stroke="#333" stroke-width="1.25"/></svg>
<div class="t b" style="left:170.00px;top:132.57px;color:#3a3a3a">Andamios</div>
<div style="left:108.50px;top:142.50px;width:474.10px;height:11.27px;background:#ffffff"></div>
<div style="left:108.50px;top:152.87px;width:474.10px;height:0.60px;background:#f1f1f1"></div>
<div style="left:136.20px;top:142.50px;width:0.50px;height:11.27px;background:#eeeeee"></div>
<div class="t" style="left:180.30px;top:143.23px;color:#222">Andamio tubular de fachada</div>
<div style="left:108.50px;top:153.17px;width:474.10px;height:11.27px;background:#ffffff"></div>
<div style="left:108.50px;top:163.53px;width:474.10px;height:0.60px;background:#f1f1f1"></div>
<div style="left:136.20px;top:153.17px;width:0.50px;height:11.27px;background:#eeeeee"></div>
<div class="t" style="left:180.30px;top:153.90px;color:#222">Plataforma motorizada</div>
<div style="left:108.50px;top:163.84px;width:474.10px;height:11.27px;background:#cce8ff"></div>
<div class="t" style="left:180.30px;top:164.57px;color:#222">Plataforma suspendida</div>
<div style="left:108.50px;top:174.50px;width:474.10px;height:11.27px;background:#eeeeee"></div>
<div class="t" style="left:112.00px;top:175.24px;color:#333;-webkit-text-stroke:0.3px #333">0XT</div>
<svg style="left:161.40px;top:178.24px" width="6.0" height="3.6" viewBox="0 0 6 3.6"><path d="M0.6 0.6L3 3L5.4 0.6" fill="none" stroke="#333" stroke-width="1.25"/></svg>
<div class="t b" style="left:170.00px;top:175.24px;color:#3a3a3a">Grúas torre</div>
<div style="left:108.50px;top:185.17px;width:474.10px;height:11.27px;background:#ffffff"></div>
<div style="left:136.20px;top:185.17px;width:0.50px;height:11.27px;background:#eeeeee"></div>
<div class="t" style="left:180.30px;top:185.90px;color:#222">Grúa torre</div>
<div style="left:108.50px;top:195.84px;width:474.10px;height:11.27px;background:#eeeeee"></div>
<div class="t" style="left:112.00px;top:196.57px;color:#333;-webkit-text-stroke:0.3px #333">0XP</div>
<svg style="left:161.40px;top:199.57px" width="6.0" height="3.6" viewBox="0 0 6 3.6"><path d="M0.6 0.6L3 3L5.4 0.6" fill="none" stroke="#333" stroke-width="1.25"/></svg>
<div class="t b" style="left:170.00px;top:196.57px;color:#3a3a3a">Plataformas elevadoras</div>
<div style="left:108.50px;top:206.50px;width:474.10px;height:11.27px;background:#ffffff"></div>
<div style="left:108.50px;top:216.87px;width:474.10px;height:0.60px;background:#f1f1f1"></div>
<div style="left:136.20px;top:206.50px;width:0.50px;height:11.27px;background:#eeeeee"></div>
<div class="t" style="left:180.30px;top:207.24px;color:#222">Cesta elevadora de brazo articulado</div>
<div style="left:108.50px;top:217.17px;width:474.10px;height:11.27px;background:#ffffff"></div>
<div style="left:108.50px;top:227.54px;width:474.10px;height:0.60px;background:#f1f1f1"></div>
<div style="left:136.20px;top:217.17px;width:0.50px;height:11.27px;background:#eeeeee"></div>
<div class="t" style="left:180.30px;top:217.90px;color:#222">Cesta elevadora de brazo telescópico</div>
<div style="left:108.50px;top:227.84px;width:474.10px;height:11.27px;background:#ffffff"></div>
<div style="left:136.20px;top:227.84px;width:0.50px;height:11.27px;background:#eeeeee"></div>
<div class="t" style="left:180.30px;top:228.57px;color:#222">Plataforma elevadora de tijera</div>
<div style="left:108.50px;top:238.50px;width:474.10px;height:11.27px;background:#eeeeee"></div>
<div class="t" style="left:112.00px;top:239.24px;color:#333;-webkit-text-stroke:0.3px #333">A</div>
<svg style="left:141.40px;top:242.24px" width="6.0" height="3.6" viewBox="0 0 6 3.6"><path d="M0.6 0.6L3 3L5.4 0.6" fill="none" stroke="#333" stroke-width="1.25"/></svg>
<div class="t b" style="left:150.00px;top:239.24px;color:#3a3a3a">Acondicionamiento del terreno</div>
<div style="left:108.50px;top:249.17px;width:474.10px;height:11.27px;background:#eeeeee"></div>
<div class="t" style="left:112.00px;top:249.90px;color:#333;-webkit-text-stroke:0.3px #333">AD</div>
<svg style="left:151.40px;top:252.90px" width="6.0" height="3.6" viewBox="0 0 6 3.6"><path d="M0.6 0.6L3 3L5.4 0.6" fill="none" stroke="#333" stroke-width="1.25"/></svg>
<div class="t b" style="left:160.00px;top:249.90px;color:#3a3a3a">Movimiento de tierras en edificación</div>
<div style="left:108.50px;top:259.84px;width:474.10px;height:11.27px;background:#eeeeee"></div>
<div class="t" style="left:112.00px;top:260.57px;color:#333;-webkit-text-stroke:0.3px #333">ADE</div>
<svg style="left:161.40px;top:263.57px" width="6.0" height="3.6" viewBox="0 0 6 3.6"><path d="M0.6 0.6L3 3L5.4 0.6" fill="none" stroke="#333" stroke-width="1.25"/></svg>
<div class="t b" style="left:170.00px;top:260.57px;color:#3a3a3a">Excavaciones</div>
<div style="left:108.50px;top:270.50px;width:474.10px;height:11.27px;background:#ffffff"></div>
<div style="left:108.50px;top:280.87px;width:474.10px;height:0.60px;background:#f1f1f1"></div>
<div style="left:136.20px;top:270.50px;width:0.50px;height:11.27px;background:#eeeeee"></div>
<div class="t" style="left:180.30px;top:271.24px;color:#222">Excavación a cielo abierto, con medios mecánicos</div>
<div style="left:108.50px;top:281.17px;width:474.10px;height:11.27px;background:#ffffff"></div>
<div style="left:108.50px;top:291.54px;width:474.10px;height:0.60px;background:#f1f1f1"></div>
<div style="left:136.20px;top:281.17px;width:0.50px;height:11.27px;background:#eeeeee"></div>
<div class="t" style="left:180.30px;top:281.91px;color:#222">Excavación de zanjas para cimentaciones</div>
<div style="left:108.50px;top:291.84px;width:474.10px;height:11.27px;background:#ffffff"></div>
<div style="left:108.50px;top:302.21px;width:474.10px;height:0.60px;background:#f1f1f1"></div>
<div style="left:136.20px;top:291.84px;width:0.50px;height:11.27px;background:#eeeeee"></div>
<div class="t" style="left:180.30px;top:292.57px;color:#222">Excavación de zanjas para instalaciones</div>
<div style="left:108.50px;top:302.51px;width:474.10px;height:11.27px;background:#ffffff"></div>
<div style="left:136.20px;top:302.51px;width:0.50px;height:11.27px;background:#eeeeee"></div>
<div class="t" style="left:180.30px;top:303.24px;color:#222">Excavación de pozos para cimentaciones</div>
<div style="left:108.50px;top:313.17px;width:474.10px;height:11.27px;background:#eeeeee"></div>
<div class="t" style="left:112.00px;top:313.91px;color:#333;-webkit-text-stroke:0.3px #333">Y</div>
<svg style="left:141.40px;top:316.91px" width="6.0" height="3.6" viewBox="0 0 6 3.6"><path d="M0.6 0.6L3 3L5.4 0.6" fill="none" stroke="#333" stroke-width="1.25"/></svg>
<div class="t b" style="left:150.00px;top:313.91px;color:#3a3a3a">Seguridad y salud</div>
<div style="left:108.50px;top:323.84px;width:474.10px;height:11.27px;background:#eeeeee"></div>
<div class="t" style="left:112.00px;top:324.57px;color:#333;-webkit-text-stroke:0.3px #333">YC</div>
<svg style="left:151.40px;top:327.57px" width="6.0" height="3.6" viewBox="0 0 6 3.6"><path d="M0.6 0.6L3 3L5.4 0.6" fill="none" stroke="#333" stroke-width="1.25"/></svg>
<div class="t b" style="left:160.00px;top:324.57px;color:#3a3a3a">Sistemas de protección colectiva</div>
<div style="left:108.50px;top:334.51px;width:474.10px;height:11.27px;background:#eeeeee"></div>
<div class="t" style="left:112.00px;top:335.24px;color:#333;-webkit-text-stroke:0.3px #333">YCB</div>
<svg style="left:161.40px;top:338.24px" width="6.0" height="3.6" viewBox="0 0 6 3.6"><path d="M0.6 0.6L3 3L5.4 0.6" fill="none" stroke="#333" stroke-width="1.25"/></svg>
<div class="t b" style="left:170.00px;top:335.24px;color:#3a3a3a">Delimitación y protección de bordes de excavación</div>
<div style="left:108.50px;top:345.17px;width:474.10px;height:11.27px;background:#ffffff"></div>
<div style="left:108.50px;top:355.54px;width:474.10px;height:0.60px;background:#f1f1f1"></div>
<div style="left:136.20px;top:345.17px;width:0.50px;height:11.27px;background:#eeeeee"></div>
<div class="t" style="left:180.30px;top:345.91px;color:#222">Vallado perimetral de delimitación de excavaciones abiertas</div>
<div style="left:108.50px;top:355.84px;width:474.10px;height:11.27px;background:#ffffff"></div>
<div style="left:136.20px;top:355.84px;width:0.50px;height:11.27px;background:#eeeeee"></div>
<div class="t" style="left:180.30px;top:356.57px;color:#222">Pasarela para protección de paso de peatones sobre zanjas</div>
<div style="left:108.50px;top:366.51px;width:474.10px;height:11.27px;background:#eeeeee"></div>
<div class="t" style="left:112.00px;top:367.24px;color:#333;-webkit-text-stroke:0.3px #333">YCE</div>
<svg style="left:161.40px;top:370.24px" width="6.0" height="3.6" viewBox="0 0 6 3.6"><path d="M0.6 0.6L3 3L5.4 0.6" fill="none" stroke="#333" stroke-width="1.25"/></svg>
<div class="t b" style="left:170.00px;top:367.24px;color:#3a3a3a">Protección de escaleras</div>
<div style="left:108.50px;top:377.18px;width:474.10px;height:11.27px;background:#ffffff"></div>
<div style="left:136.20px;top:377.18px;width:0.50px;height:11.27px;background:#eeeeee"></div>
<div class="t" style="left:180.30px;top:377.91px;color:#222">Sistema provisional de protección de hueco de escalera en construcción, con barandilla</div>
<div style="left:108.50px;top:387.84px;width:474.10px;height:11.27px;background:#eeeeee"></div>
<div class="t" style="left:112.00px;top:388.58px;color:#333;-webkit-text-stroke:0.3px #333">YCF</div>
<svg style="left:161.40px;top:391.58px" width="6.0" height="3.6" viewBox="0 0 6 3.6"><path d="M0.6 0.6L3 3L5.4 0.6" fill="none" stroke="#333" stroke-width="1.25"/></svg>
<div class="t b" style="left:170.00px;top:388.58px;color:#3a3a3a">Protección perimetral de bordes de forjado</div>
<div style="left:108.50px;top:398.51px;width:474.10px;height:11.27px;background:#ffffff"></div>
<div style="left:108.50px;top:408.88px;width:474.10px;height:0.60px;background:#f1f1f1"></div>
<div style="left:136.20px;top:398.51px;width:0.50px;height:11.27px;background:#eeeeee"></div>
<div class="t" style="left:180.30px;top:399.24px;color:#222">Sistema provisional de protección de borde de forjado, clase A</div>
<div style="left:108.50px;top:409.18px;width:474.10px;height:11.27px;background:#ffffff"></div>
<div style="left:108.50px;top:419.54px;width:474.10px;height:0.60px;background:#f1f1f1"></div>
<div style="left:136.20px;top:409.18px;width:0.50px;height:11.27px;background:#eeeeee"></div>
<div class="t" style="left:180.30px;top:409.91px;color:#222">Sistema provisional de protección de borde de forjado, clase B</div>
<div style="left:108.50px;top:419.84px;width:474.10px;height:11.27px;background:#ffffff"></div>
<div style="left:108.50px;top:430.21px;width:474.10px;height:0.60px;background:#f1f1f1"></div>
<div style="left:136.20px;top:419.84px;width:0.50px;height:11.27px;background:#eeeeee"></div>
<div class="t" style="left:180.30px;top:420.58px;color:#222">Sistema provisional de protección de borde de forjado, clase B, en cubiertas inclinadas metálicas</div>
<div style="left:108.50px;top:430.51px;width:474.10px;height:11.27px;background:#ffffff"></div>
<div style="left:108.50px;top:440.88px;width:474.10px;height:0.60px;background:#f1f1f1"></div>
<div style="left:136.20px;top:430.51px;width:0.50px;height:11.27px;background:#eeeeee"></div>
<div class="t" style="left:180.30px;top:431.24px;color:#222">Sistema provisional de protección de borde de forjado, clase B, de polipropileno reforzado con fibra de vidrio</div>
<div style="left:108.50px;top:441.18px;width:474.10px;height:11.27px;background:#ffffff"></div>
<div style="left:108.50px;top:451.54px;width:474.10px;height:0.60px;background:#f1f1f1"></div>
<div style="left:136.20px;top:441.18px;width:0.50px;height:11.27px;background:#eeeeee"></div>
<div class="t" style="left:180.30px;top:441.91px;color:#222">Sistema provisional de protección de borde de forjado, clase C, en naves industriales</div>
<div style="left:108.50px;top:451.84px;width:474.10px;height:11.27px;background:#ffffff"></div>
<div style="left:136.20px;top:451.84px;width:0.50px;height:11.27px;background:#eeeeee"></div>
<div class="t" style="left:180.30px;top:452.58px;color:#222">Sistema V de red de seguridad colocada verticalmente con soportes tipo horca</div>
<div style="left:108.50px;top:462.51px;width:474.10px;height:11.27px;background:#eeeeee"></div>
<div class="t" style="left:112.00px;top:463.24px;color:#333;-webkit-text-stroke:0.3px #333">YCH</div>
<svg style="left:161.40px;top:466.24px" width="6.0" height="3.6" viewBox="0 0 6 3.6"><path d="M0.6 0.6L3 3L5.4 0.6" fill="none" stroke="#333" stroke-width="1.25"/></svg>
<div class="t b" style="left:170.00px;top:463.24px;color:#3a3a3a">Protección de huecos horizontales en estructuras</div>
<div style="left:108.50px;top:473.18px;width:474.10px;height:11.27px;background:#ffffff"></div>
<div style="left:108.50px;top:483.54px;width:474.10px;height:0.60px;background:#f1f1f1"></div>
<div style="left:136.20px;top:473.18px;width:0.50px;height:11.27px;background:#eeeeee"></div>
<div class="t" style="left:180.30px;top:473.91px;color:#222">Red horizontal de protección de pequeño hueco de forjado</div>
<div style="left:108.50px;top:483.84px;width:474.10px;height:11.27px;background:#ffffff"></div>
<div style="left:108.50px;top:494.21px;width:474.10px;height:0.60px;background:#f1f1f1"></div>
<div style="left:136.20px;top:483.84px;width:0.50px;height:11.27px;background:#eeeeee"></div>
<div class="t" style="left:180.30px;top:484.58px;color:#222">Entablado de madera para protección de pequeño hueco horizontal de forjado</div>
<div style="left:108.50px;top:494.51px;width:474.10px;height:11.27px;background:#ffffff"></div>
<div style="left:136.20px;top:494.51px;width:0.50px;height:11.27px;background:#eeeeee"></div>
<div class="t" style="left:180.30px;top:495.25px;color:#222">Entablado de madera para protección de hueco horizontal de ascensor</div>
<div style="left:103.60px;top:508.30px;width:821.80px;height:5.00px;background:#f0f0f0;border-bottom:0.7px solid #d9d9d9"></div>
<div style="left:103.60px;top:513.20px;width:821.80px;height:21.20px;background:#e6e6e6"></div>
<div style="left:107.30px;top:517.30px;width:38.60px;height:13.20px;background:#fff;border:1px solid #4f95dc;border-radius:2px"></div>
<div class="t c" style="left:66.60px;top:519.30px;color:#333">Aceptar</div>
<div style="left:885.90px;top:517.50px;width:35.00px;height:13.00px;background:#fbfbfb;border:0.8px solid #dcdcdc;border-radius:2px"></div>
<div class="t c" style="left:843.40px;top:519.40px;color:#333">Cancelar</div>
<div style="left:597.60px;top:110.20px;width:322.60px;height:398.10px;background:#fff"></div>
<div style="left:597.20px;top:109.80px;width:325.80px;height:1.00px;background:#dcdcdc"></div>
<div style="left:597.20px;top:110.00px;width:1.00px;height:398.30px;background:#dcdcdc"></div>
<div style="left:597.20px;top:507.70px;width:323.00px;height:1.00px;background:#dcdcdc"></div>
<div style="left:598.10px;top:110.70px;width:321.60px;height:12.60px;background:#f3f3f3;border-bottom:0.6px solid #e3e3e3"></div>
<div class="t" style="left:601.50px;top:112.80px;color:#333">Referencia</div>
<div style="left:598.10px;top:123.30px;width:321.60px;height:10.30px;background:#fff;border-bottom:0.5px solid #eee"></div>
<div class="t" style="left:601.50px;top:124.40px;color:#222">Plaforma suspendida motorizada</div>
<div style="left:598.10px;top:134.00px;width:321.60px;height:10.40px;background:#4ea1e2"></div>
<div class="t" style="left:601.50px;top:134.60px;color:#fff">Plataforma suspendida manual</div>
<div style="left:598.10px;top:155.00px;width:321.60px;height:0.50px;background:#eee"></div>
<svg style="left:600.00px;top:100.30px" width="7.5" height="7.5" viewBox="0 0 7.5 7.5"><path d="M3.75 0V7.5M0 3.75H7.5" stroke="#333" stroke-width="1"/></svg>
<svg style="left:612.00px;top:100.00px" width="8" height="8" viewBox="0 0 8 8"><path d="M0.8 7.2L1.5 5L6 0.5L7.5 2L3 6.5Z" fill="#f0c838" stroke="#555" stroke-width="0.6"/></svg>
<svg style="left:624.00px;top:100.30px" width="8" height="8" viewBox="0 0 8 8"><rect x="2.5" y="0.5" width="5" height="5" fill="#ccc" stroke="#aaa" stroke-width="0.5"/><rect x="0.5" y="2.5" width="5" height="5" fill="#ddd" stroke="#aaa" stroke-width="0.5"/></svg>
<svg style="left:636.50px;top:100.00px" width="8" height="8" viewBox="0 0 8 8"><path d="M0.8 0.8L7.2 7.2M7.2 0.8L0.8 7.2" stroke="#d83030" stroke-width="1.3"/></svg>
<div style="left:648.00px;top:99.50px;width:0.60px;height:9.00px;background:#c8c8c8"></div>
<svg style="left:652.80px;top:102.00px" width="8" height="4.5" viewBox="0 0 8 4.5"><path d="M0 4.5L4 0L8 4.5Z" fill="#333"/></svg>
<svg style="left:665.00px;top:102.00px" width="8" height="4.5" viewBox="0 0 8 4.5"><path d="M0 0L4 4.5L8 0Z" fill="#333"/></svg>
<div style="left:600.50px;top:147.00px;width:209.70px;height:330.60px;background:#f0f0f0;border:2.6px solid #2a78cc;box-shadow:0 0 1.5px rgba(39,119,204,0.45)"></div>
<div style="left:600.50px;top:147.00px;width:209.70px;height:17.00px;background:#2e7dce;border-top:1px solid #2470c4;border-bottom:1px solid #2874c8"></div>
<div class="t c" style="left:632.80px;top:151.80px;color:#fff">Plataforma suspendida</div>
<svg style="left:791.60px;top:153.60px" width="6" height="6" viewBox="0 0 6 6"><path d="M0.5 0.5L5.5 5.5M5.5 0.5L0.5 5.5" stroke="#fff" stroke-width="0.9"/></svg>
<div class="t" style="left:609.00px;top:171.00px;color:#333">Referencia</div>
<div style="left:641.80px;top:170.00px;width:159.60px;height:11.30px;background:#fff;border-bottom:0.8px solid #b8b8b8"></div>
<div class="t" style="left:645.00px;top:170.90px;color:#222">Plataforma suspendida manual</div>
<div style="left:607.80px;top:187.70px;width:195.70px;height:46.90px;background:#fbfbfb"></div>
<div class="t" style="left:642.20px;top:190.90px;color:#333">Duración del alquiler (días naturales)</div>
<div style="left:748.30px;top:189.90px;width:19.70px;height:11.40px;background:#fff;border:0.5px solid #efefef;border-bottom:0.8px solid #d8d8d8"></div>
<div class="t" style="left:736px;top:190.3px;width:30px;text-align:right;color:#222;transform-origin:100% 50%">30</div>
<div style="left:608.80px;top:212.00px;width:193.70px;height:18.50px;border:0.6px solid #e8e8e8"></div>
<div style="left:610.50px;top:208.00px;width:40.00px;height:6.00px;background:#fbfbfb"></div>
<div class="t" style="left:611.50px;top:207.00px;color:#333">Accionamiento</div>
<svg style="left:647.20px;top:218.70px" width="6" height="6" viewBox="0 0 6 6"><circle cx="3" cy="3" r="2.6" fill="#fff" stroke="#777" stroke-width="0.6"/><circle cx="3" cy="3" r="1.2" fill="#2e9a3e"/></svg>
<div class="t b" style="left:655.80px;top:217.10px;color:#222">Manual</div>
<svg style="left:720.30px;top:218.70px" width="6" height="6" viewBox="0 0 6 6"><circle cx="3" cy="3" r="2.6" fill="#fff" stroke="#777" stroke-width="0.6"/></svg>
<div class="t" style="left:728.90px;top:217.10px;color:#333">Motorizado</div>
<div style="left:606.80px;top:234.60px;width:199.20px;height:163.80px;background:#fbfbfb;border:0.6px solid #e2e2e2"></div>
<div style="left:608.50px;top:236.50px;width:196.00px;height:160.00px;background:#efeded"></div>
<div style="left:608.50px;top:236.50px;width:10.00px;height:160.00px;background:#f2f1f1"></div>
<div style="left:790.00px;top:236.50px;width:14.50px;height:160.00px;background:#f3f2f2"></div>
<svg style="left:600.00px;top:230.00px" width="220" height="180" viewBox="600 230 220 180">
<g stroke-linecap="round" stroke-linejoin="round" fill="none">
<!-- left arm -->
<path d="M642.5 251.6 L658.9 254" stroke="#857322" stroke-width="2.6"/>
<path d="M656.8 254 L658.6 266.5 M647.5 255.5 L655.8 266.5" stroke="#9a8628" stroke-width="1.6"/>
<path d="M653.4 267.6 L661.3 268.6" stroke="#b09a30" stroke-width="1.6"/>
<path d="M658.9 254.8 L707.3 271.2" stroke="#7f6e28" stroke-width="0.8"/>
<path d="M661.3 267.8 L706.6 270.6" stroke="#9a8630" stroke-width="0.9"/>
<path d="M702.7 271.8 L708.6 272.3" stroke="#8a7628" stroke-width="1.6"/>
<!-- right arm -->
<path d="M723.8 241.5 L739.4 245.4" stroke="#857322" stroke-width="2.6"/>
<path d="M737.8 245.4 L737.8 260.2 M727.7 247 L734.7 259.4" stroke="#9a8628" stroke-width="1.6"/>
<path d="M731 262.5 L742.5 262.5" stroke="#b09a30" stroke-width="1.7"/>
<path d="M739.4 246.2 L777.7 266.5" stroke="#6f6228" stroke-width="0.8"/>
<path d="M742.5 261.5 L776.9 266.5" stroke="#8a7a30" stroke-width="0.9"/>
<path d="M774 268.8 L780 268.8" stroke="#444" stroke-width="1.8"/>
<!-- hoists -->
<path d="M645 256.3 L645.6 301.6" stroke="#d6d6d6" stroke-width="2.3"/>
<path d="M643.3 273.5 h5.5 l0.7 12 l-2.5 7 h-3 z" fill="#dadada" stroke="#9a9a9a" stroke-width="0.5"/>
<path d="M649 278 l3 -0.8 M649.5 284 l3.5 1.5 M649 287 l4 0.6" stroke="#666" stroke-width="0.9"/>
<path d="M724.5 247 L724.5 303.2" stroke="#d6d6d6" stroke-width="2.3"/>
<path d="M721 270.4 h6.5 l0.2 16 l-2.7 7.4 h-3 l-2 -6 z" fill="#dadada" stroke="#9a9a9a" stroke-width="0.5"/>
<path d="M721 276 l-5 3 M721 283 l-5 -0.6 M721 286 l-4.5 2" stroke="#666" stroke-width="0.9"/>
<circle cx="646.4" cy="300.5" r="1.5" fill="#e03030"/>
<circle cx="723.8" cy="304.6" r="1.9" fill="#e02828"/>
<!-- cables -->
<path d="M646.4 302 V358.3 M724.5 306.2 V378" stroke="#909090" stroke-width="0.5"/>
<path d="M648 302 Q652 320 650 340 M722 306 Q716 315 716 340" stroke="#aaa" stroke-width="0.4"/>
<!-- floor -->
<path d="M637 343 L660 336 L733.4 350 L705.7 358 Z" fill="#8c8058" stroke="none"/>
<path d="M637 339 L660 332 L733.4 346 L733.4 350.5 L660 337.5 L639 344 Z" fill="#d6be28" stroke="none"/>
<path d="M662 344 L728 354" stroke="#6f6440" stroke-width="0.6"/>
<!-- back rails -->
<path d="M663.5 306.5 L725.4 309.5" stroke="#d8c024" stroke-width="1.7"/>
<path d="M661 318 L733 323 M661 321.5 L733 327" stroke="#ccb424" stroke-width="1.3"/>
<path d="M683 307.5 V333 M704 308.5 V338" stroke="#c8b020" stroke-width="1.3"/>
<!-- left end arch -->
<path d="M635.5 343 V312 Q635.8 305.5 641 305.3 L655 305.3 Q659.2 305.8 659.2 311 V338.6" stroke="#e2c82a" stroke-width="2.1"/>
<path d="M647 305.5 V340" stroke="#cdb422" stroke-width="1"/>
<!-- front top rail + right arch -->
<path d="M636.6 308.3 L702 311.2 Q708.5 312 709 318 V363" stroke="#e6cc2c" stroke-width="2.1"/>
<path d="M709.2 318 Q709.8 310 716 309.5 L728 309 Q733.4 309.5 733.4 315 V352" stroke="#e2c82a" stroke-width="2.0"/>
<path d="M721 309.3 V355" stroke="#cdb422" stroke-width="1"/>
<!-- front mid rails -->
<path d="M636.5 323.4 L704.3 331.4 L733.4 326.5 M636.5 326.4 L704.3 334.4" stroke="#e2c82a" stroke-width="1.7"/>
<!-- front posts -->
<path d="M655.5 309.5 V352.5 M678.1 310.3 V357.5" stroke="#e0c62a" stroke-width="1.9"/>
<!-- kickboards -->
<path d="M635.2 341.5 L705.7 357.5 L705.7 366.3 L635.9 349 Z" fill="#e0c62c" stroke="#b49c18" stroke-width="0.5"/>
<path d="M635.5 345.5 L705.7 361.5" stroke="#c8ae20" stroke-width="0.5"/>
<path d="M705.7 357.5 L733.4 349.5 L733.4 357.5 L705.7 366.3 Z" fill="#a8921c" stroke="#8a7810" stroke-width="0.5"/>
<!-- weights -->
<path d="M638.1 360.5 L650 358.3 L654.8 359.8 V366 L643 367.9 L638.1 366.5 Z" fill="#cfcfcf" stroke="#9a9a9a" stroke-width="0.5"/>
<path d="M643 361.5 L654.8 359.8 M643 361.5 V367.9" stroke="#9a9a9a" stroke-width="0.5"/>
<path d="M714.3 380.5 L728 377.9 L732.8 379.8 V388.8 L719.5 391.8 L714.3 389.8 Z" fill="#d4d4d4" stroke="#9a9a9a" stroke-width="0.5"/>
<path d="M719.5 382.5 L732.8 379.8 M719.5 382.5 V391.8" stroke="#999" stroke-width="0.5"/>
<path d="M719.5 382.5 L732.8 379.8 V388.8 L719.5 391.8 Z" fill="#b8b8b8" stroke="none"/>
</g></svg>
<div style="left:607.80px;top:401.80px;width:195.70px;height:46.20px;background:#fbfbfb"></div>
<div style="left:608.80px;top:403.00px;width:193.70px;height:44.00px;border:0.6px solid #ececec"></div>
<div style="left:610.50px;top:399.50px;width:68.00px;height:6.00px;background:#fbfbfb"></div>
<div class="t" style="left:611.50px;top:398.30px;color:#333">Características técnicas</div>
<div class="t" style="left:655.10px;top:410.60px;color:#333">Longitud de la plataforma (m)</div>
<div style="left:744.80px;top:409.80px;width:10.80px;height:10.70px;background:#fff;border:0.5px solid #efefef;border-bottom:0.8px solid #d8d8d8"></div>
<div class="t" style="left:748.50px;top:410.40px;color:#222">3</div>
<div style="left:655.10px;top:427.50px;width:101.10px;height:18.40px;border:0.6px solid #e0e0e0"></div>
<div style="left:658.50px;top:424.00px;width:85.00px;height:6.00px;background:#fbfbfb"></div>
<div class="t" style="left:659.40px;top:422.40px;color:#333">Altura máxima de trabajo (m)</div>
<svg style="left:697.30px;top:433.70px" width="6" height="6" viewBox="0 0 6 6"><circle cx="3" cy="3" r="2.6" fill="#fff" stroke="#777" stroke-width="0.6"/><circle cx="3" cy="3" r="1.2" fill="#2e9a3e"/></svg>
<div class="t b" style="left:705.70px;top:432.10px;color:#222">30</div>
<div style="left:603.10px;top:448.00px;width:204.50px;height:5.40px;background:#f0f0f0;border-bottom:0.6px solid #dadada"></div>
<div style="left:603.10px;top:453.40px;width:204.50px;height:21.60px;background:#e6e6e6"></div>
<div style="left:606.90px;top:458.00px;width:38.90px;height:12.80px;background:#fff;border:1px solid #4f95dc;border-radius:2px"></div>
<div class="t c" style="left:566.35px;top:459.80px;color:#333">Aceptar</div>
<div style="left:768.00px;top:458.40px;width:35.50px;height:12.20px;background:#fbfbfb;border:0.8px solid #dcdcdc;border-radius:2px"></div>
<div class="t c" style="left:725.75px;top:459.90px;color:#333">Cancelar</div>
<svg style="left:113.00px;top:537.20px" width="7" height="3" viewBox="0 0 7 3"><path d="M0 3Q3.5 -1 7 3" fill="#5a7fb8"/></svg>
<div style="left:127.00px;top:537.20px;width:7.00px;height:2.50px;background:#3a6aa5"></div>
<div style="left:143.00px;top:537.50px;width:6.00px;height:2.00px;background:#7a8aa5"></div>
<div style="left:0.00px;top:539.80px;width:1024.00px;height:10.20px;background:#ececec"></div>
<svg style="left:4.00px;top:540.50px" width="9.2" height="9.2" viewBox="0 0 9.2 9.2"><circle cx="4.6" cy="4.6" r="4.4" fill="#1f7ad6"/><rect x="4" y="3.8" width="1.3" height="3.6" fill="#fff"/><circle cx="4.6" cy="2.4" r="0.75" fill="#fff"/></svg>
<div class="t" style="left:17.00px;top:540.40px;color:#333">Proyecto - Unidades de obra. Unidades de obra</div>
</body></html>
